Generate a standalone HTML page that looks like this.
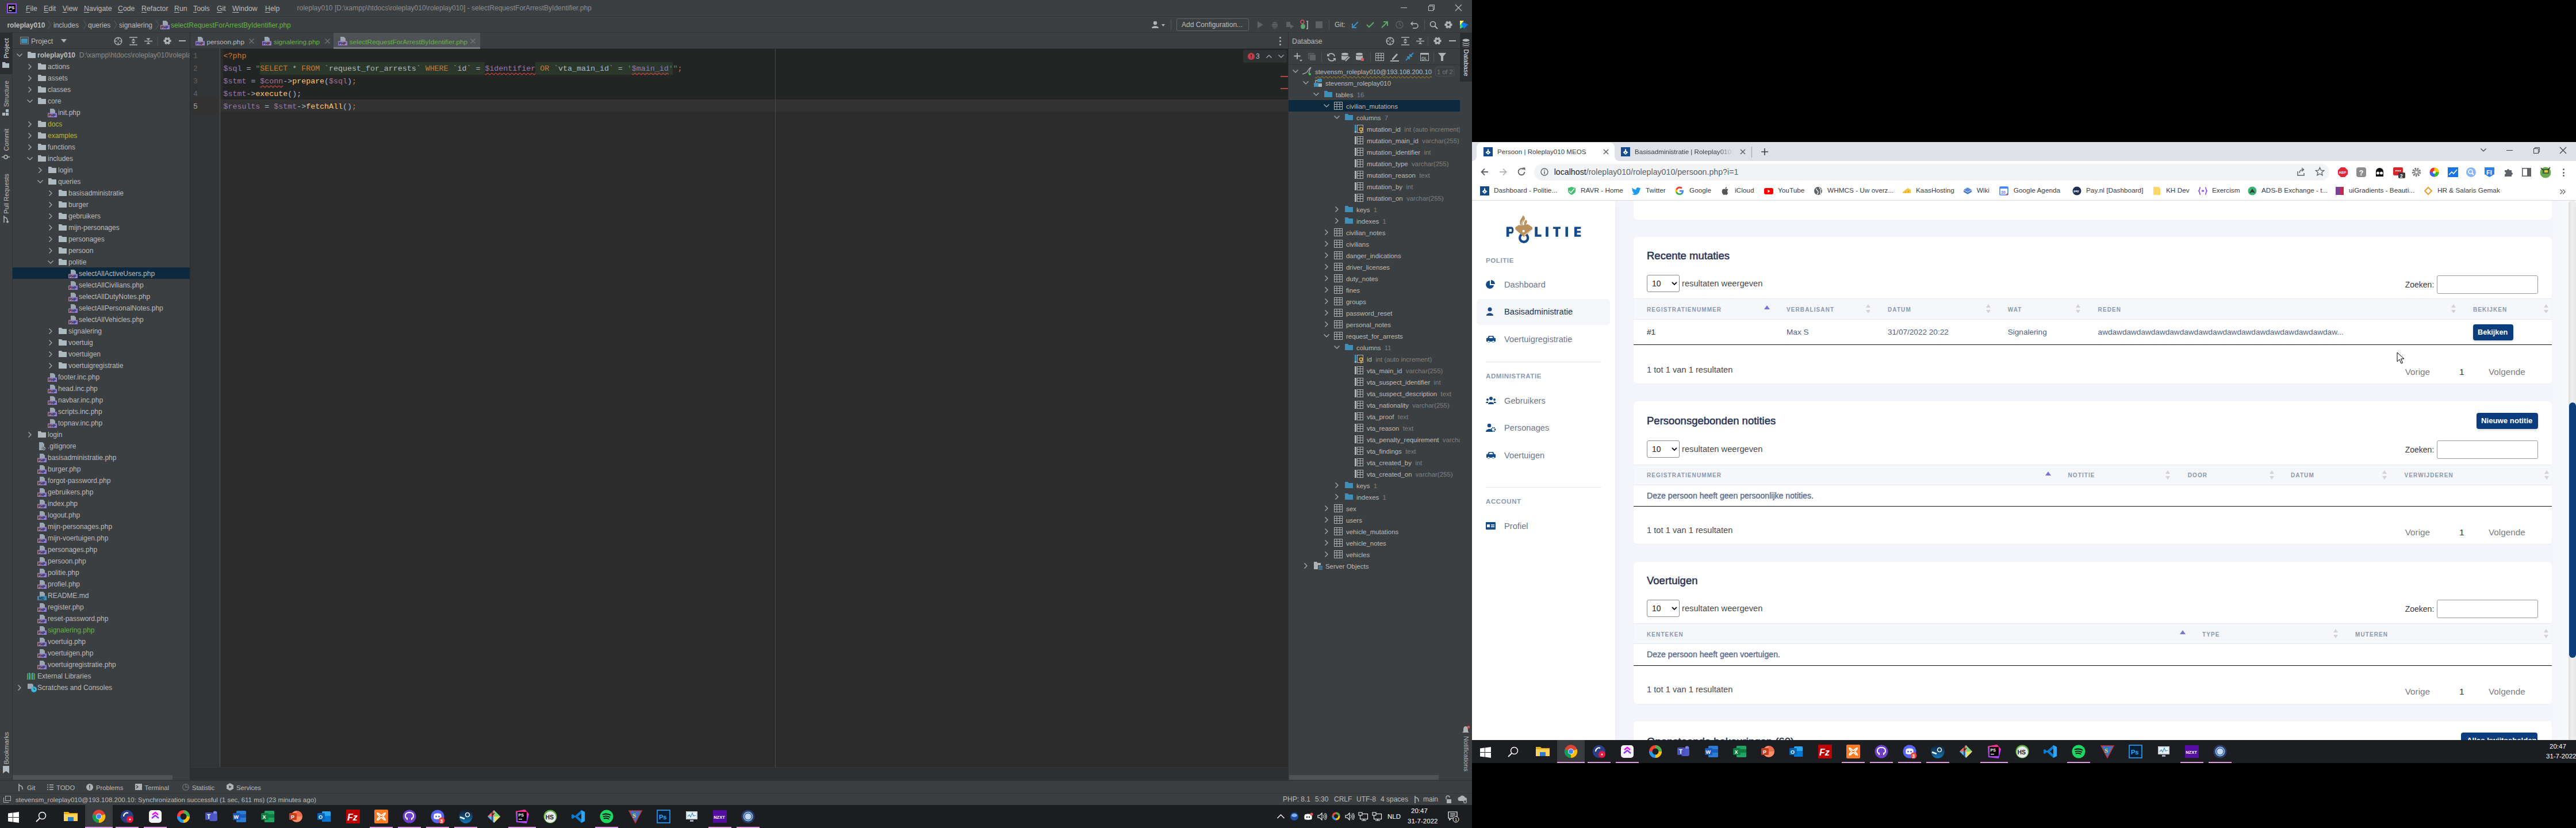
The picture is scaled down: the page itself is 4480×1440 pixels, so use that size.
<!DOCTYPE html><html><head><meta charset="utf-8"><style>
*{margin:0;padding:0;box-sizing:border-box}
html,body{width:4480px;height:1440px;overflow:hidden;background:#000}
body{position:relative;font-family:"Liberation Sans",sans-serif}
.t{position:absolute;white-space:nowrap;line-height:20px;height:20px}
.ide{font-size:12px;color:#bbbbbb}
.mono{font-family:"Liberation Mono",monospace}
svg{position:absolute;overflow:visible}
</style></head><body>
<div class="ide" style="position:absolute;left:0;top:0;width:2560px;height:1440px;background:#3c3f41;overflow:hidden">
<div style="position:absolute;left:0px;top:0px;width:2560px;height:28px;background:#3c3f41"></div>
<div style="position:absolute;left:0px;top:28px;width:2560px;height:1px;background:#333537"></div>
<svg style="left:12px;top:6px" width="17" height="17"><defs><linearGradient id="psg" x1="0" y1="0" x2="1" y2="1"><stop offset="0" stop-color="#b345f1"/><stop offset="1" stop-color="#765af8"/></linearGradient></defs><rect width="17" height="17" fill="url(#psg)"/><rect x="2" y="2" width="13" height="13" fill="#000"/><text x="3.2" y="9.5" font-size="7.5" font-weight="bold" fill="#fff" font-family="Liberation Sans">PS</text><rect x="3.5" y="12" width="5" height="1.2" fill="#fff"/></svg>
<div class="t" style="left:45px;top:5px;font-size:12.3px;color:#bbbbbb"><u style="text-decoration-thickness:1px;text-underline-offset:2px">F</u>ile</div>
<div class="t" style="left:76px;top:5px;font-size:12.3px;color:#bbbbbb"><u style="text-decoration-thickness:1px;text-underline-offset:2px">E</u>dit</div>
<div class="t" style="left:108.7px;top:5px;font-size:12.3px;color:#bbbbbb"><u style="text-decoration-thickness:1px;text-underline-offset:2px">V</u>iew</div>
<div class="t" style="left:146px;top:5px;font-size:12.3px;color:#bbbbbb"><u style="text-decoration-thickness:1px;text-underline-offset:2px">N</u>avigate</div>
<div class="t" style="left:205px;top:5px;font-size:12.3px;color:#bbbbbb"><u style="text-decoration-thickness:1px;text-underline-offset:2px">C</u>ode</div>
<div class="t" style="left:246px;top:5px;font-size:12.3px;color:#bbbbbb"><u style="text-decoration-thickness:1px;text-underline-offset:2px">R</u>efactor</div>
<div class="t" style="left:303px;top:5px;font-size:12.3px;color:#bbbbbb"><u style="text-decoration-thickness:1px;text-underline-offset:2px">R</u>un</div>
<div class="t" style="left:336px;top:5px;font-size:12.3px;color:#bbbbbb"><u style="text-decoration-thickness:1px;text-underline-offset:2px">T</u>ools</div>
<div class="t" style="left:377px;top:5px;font-size:12.3px;color:#bbbbbb"><u style="text-decoration-thickness:1px;text-underline-offset:2px">G</u>it</div>
<div class="t" style="left:404px;top:5px;font-size:12.3px;color:#bbbbbb"><u style="text-decoration-thickness:1px;text-underline-offset:2px">W</u>indow</div>
<div class="t" style="left:461px;top:5px;font-size:12.3px;color:#bbbbbb"><u style="text-decoration-thickness:1px;text-underline-offset:2px">H</u>elp</div>
<div class="t" style="left:516.5px;top:4px;font-size:12px;color:#8b8d8f">roleplay010 [D:\xampp\htdocs\roleplay010\roleplay010] - selectRequestForArrestByIdentifier.php</div>
<div style="position:absolute;left:2436px;top:13px;width:11px;height:1px;background:#bbb"></div>
<svg style="left:2484px;top:8px" width="12" height="12"><rect x="0.5" y="2.5" width="8" height="8" fill="none" stroke="#bbb"/><path d="M2.5 2.5V0.5H10.5V8.5H8.5" fill="none" stroke="#bbb"/></svg>
<svg style="left:2531px;top:8px" width="12" height="12"><path d="M0 0L11 11M11 0L0 11" stroke="#bbb" stroke-width="1.2"/></svg>
<div style="position:absolute;left:0px;top:29px;width:2560px;height:28px;background:#3c3f41"></div>
<div style="position:absolute;left:0px;top:56px;width:2560px;height:1px;background:#333537"></div>
<div class="t" style="left:12.4px;top:34px;font-size:12px;color:#bbbbbb;font-weight:bold">roleplay010</div>
<div class="t" style="left:93px;top:34px;font-size:12px;color:#bbbbbb;">includes</div>
<div class="t" style="left:153px;top:34px;font-size:12px;color:#bbbbbb;">queries</div>
<div class="t" style="left:207px;top:34px;font-size:12px;color:#bbbbbb;">signalering</div>
<svg style="left:83px;top:35px" width="6" height="16"><path d="M0.5 0.5L5 8L0.5 15.5" fill="none" stroke="#5e6163" stroke-width="1"/></svg>
<svg style="left:145px;top:35px" width="6" height="16"><path d="M0.5 0.5L5 8L0.5 15.5" fill="none" stroke="#5e6163" stroke-width="1"/></svg>
<svg style="left:198px;top:35px" width="6" height="16"><path d="M0.5 0.5L5 8L0.5 15.5" fill="none" stroke="#5e6163" stroke-width="1"/></svg>
<svg style="left:271px;top:35px" width="6" height="16"><path d="M0.5 0.5L5 8L0.5 15.5" fill="none" stroke="#5e6163" stroke-width="1"/></svg>
<svg style="left:279px;top:35px" width="16" height="16"><path d="M4 1H10L13 4V9H4Z" fill="#9aa7b0"/><path d="M4 1V6H7V1" fill="#9aa7b0"/><rect x="0" y="8.5" width="16" height="7.5" fill="#9c7fcb"/><text x="1" y="15" font-size="6.3" font-weight="bold" fill="#2b2b2b" font-family="Liberation Sans">PHP</text></svg>
<div class="t" style="left:297px;top:34px;font-size:12px;color:#62b543">selectRequestForArrestByIdentifier.php</div>
<svg style="left:2002px;top:35px" width="28" height="16"><circle cx="7" cy="5" r="3.2" fill="#aeb3b8"/><path d="M1 14C1 9 13 9 13 14Z" fill="#aeb3b8"/><path d="M18 7L24 7L21 11Z" fill="#aeb3b8"/></svg>
<div style="position:absolute;left:2036px;top:34px;width:1px;height:18px;background:#555"></div>
<div style="position:absolute;left:2046px;top:32px;width:126px;height:22px;border:1px solid #646464;border-radius:3px"></div>
<div class="t" style="left:2055px;top:33px;font-size:12px;color:#bbbbbb">Add Configuration...</div>
<svg style="left:2185px;top:36px" width="14" height="14"><path d="M2 1L12 7L2 13Z" fill="#5f6163"/></svg>
<svg style="left:2209px;top:35px" width="16" height="16"><ellipse cx="8" cy="9" rx="5" ry="6" fill="#5f6163"/><path d="M1 6H15M1 10H15M1 13H15" stroke="#3c3f41"/></svg>
<svg style="left:2235px;top:35px" width="16" height="16"><path d="M2 3H9V12H2Z" fill="#5f6163"/><path d="M9 7L15 11L9 15Z" fill="#5f6163"/></svg>
<svg style="left:2260px;top:34px" width="16" height="18"><circle cx="5" cy="4" r="3" fill="none" stroke="#e05555" stroke-width="1.3"/><ellipse cx="6" cy="12" rx="4" ry="4.5" fill="#59a869"/><path d="M12 3H14V16H12" fill="none" stroke="#bbb" stroke-width="1.5"/></svg>
<div style="position:absolute;left:2288px;top:37px;width:12px;height:12px;background:#5f6163"></div>
<div style="position:absolute;left:2311px;top:34px;width:1px;height:18px;background:#555"></div>
<div class="t" style="left:2321px;top:33px;font-size:12px;color:#bbbbbb">Git:</div>
<svg style="left:2350px;top:36px" width="14" height="14"><path d="M12 2L2 12M2 5V12H9" fill="none" stroke="#3592c4" stroke-width="2"/></svg>
<svg style="left:2376px;top:36px" width="14" height="14"><path d="M1 7L5 11L13 3" fill="none" stroke="#59a869" stroke-width="2"/></svg>
<svg style="left:2401px;top:36px" width="14" height="14"><path d="M2 12L12 2M5 2H12V9" fill="none" stroke="#59a869" stroke-width="2"/></svg>
<svg style="left:2427px;top:36px" width="14" height="14"><circle cx="7" cy="7" r="6" fill="none" stroke="#5f6163" stroke-width="1.3"/><path d="M7 3V7L10 9" fill="none" stroke="#5f6163" stroke-width="1.2"/></svg>
<svg style="left:2453px;top:36px" width="14" height="14"><path d="M4 2L1 5L4 8M1 5H9A4 4 0 0 1 9 13H4" fill="none" stroke="#bbb" stroke-width="1.4"/></svg>
<div style="position:absolute;left:2477px;top:34px;width:1px;height:18px;background:#555"></div>
<svg style="left:2486px;top:36px" width="15" height="15"><circle cx="6" cy="6" r="4.5" fill="none" stroke="#bbb" stroke-width="1.6"/><path d="M9.5 9.5L14 14" stroke="#bbb" stroke-width="1.8"/></svg>
<svg style="left:2512px;top:36px" width="14" height="14" viewBox="0 0 14 14"><path fill-rule="evenodd" d="M13.57 5.25 L13.57 8.75 L11.04 9.21 L10.93 9.39 L11.80 11.82 L8.77 13.57 L7.11 11.60 L6.89 11.60 L5.23 13.57 L2.20 11.82 L3.07 9.39 L2.96 9.21 L0.43 8.75 L0.43 5.25 L2.96 4.79 L3.07 4.61 L2.20 2.18 L5.23 0.43 L6.89 2.40 L7.11 2.40 L8.77 0.43 L11.80 2.18 L10.93 4.61 L11.04 4.79Z M7 4.9A2.1 2.1 0 1 0 7 9.1A2.1 2.1 0 1 0 7 4.9Z" fill="#afb1b3"/></svg>
<svg style="left:2538px;top:35px" width="16" height="16"><path d="M1 1L15 8L1 15Z" fill="#21d789"/><path d="M1 1L15 8L8 15Z" fill="#087cfa"/><path d="M1 1L8 1L1 9Z" fill="#fcf84a"/></svg>
<div style="position:absolute;left:0px;top:57px;width:21px;height:1300px;background:#3c3f41"></div>
<div style="position:absolute;left:21px;top:57px;width:1px;height:1300px;background:#323232"></div>
<div style="position:absolute;left:0px;top:57px;width:21px;height:72px;background:#2b2d30"></div>
<div style="position:absolute;left:10.5px;top:84px;width:0;height:0"><div style="position:absolute;left:0;top:0;transform:translate(-50%,-50%) rotate(-90deg);white-space:nowrap;font-size:11.3px;line-height:14px;color:#dfe1e5">Project</div></div>
<svg style="left:4px;top:107px" width="13" height="12"><path d="M0 1H5L6 3H12V11H0Z" fill="#aeb9c0"/></svg>
<div style="position:absolute;left:10.5px;top:163px;width:0;height:0"><div style="position:absolute;left:0;top:0;transform:translate(-50%,-50%) rotate(-90deg);white-space:nowrap;font-size:11.3px;line-height:14px;color:#bbbbbb">Structure</div></div>
<svg style="left:4px;top:190px" width="12" height="12"><rect x="0" y="6" width="5" height="5" fill="#aeb9c0"/><rect x="6" y="6" width="5" height="5" fill="#aeb9c0"/><rect x="6" y="0" width="5" height="5" fill="#aeb9c0"/></svg>
<div style="position:absolute;left:10.5px;top:242.5px;width:0;height:0"><div style="position:absolute;left:0;top:0;transform:translate(-50%,-50%) rotate(-90deg);white-space:nowrap;font-size:11.3px;line-height:14px;color:#bbbbbb">Commit</div></div>
<svg style="left:3px;top:267px" width="14" height="12"><circle cx="7" cy="6" r="3" fill="none" stroke="#aeb9c0" stroke-width="1.5"/><path d="M0 6H4M10 6H14" stroke="#aeb9c0" stroke-width="1.5"/></svg>
<div style="position:absolute;left:10.5px;top:336.5px;width:0;height:0"><div style="position:absolute;left:0;top:0;transform:translate(-50%,-50%) rotate(-90deg);white-space:nowrap;font-size:11.3px;line-height:14px;color:#bbbbbb">Pull Requests</div></div>
<svg style="left:4px;top:374px" width="12" height="14"><path d="M3 1V13M3 4C9 4 9 8 9 13M7 11L9 13L11 11" fill="none" stroke="#aeb9c0" stroke-width="1.5"/></svg>
<div style="position:absolute;left:10.5px;top:1301px;width:0;height:0"><div style="position:absolute;left:0;top:0;transform:translate(-50%,-50%) rotate(-90deg);white-space:nowrap;font-size:11.3px;line-height:14px;color:#bbbbbb">Bookmarks</div></div>
<svg style="left:5px;top:1332px" width="11" height="13"><path d="M0 0H11V13L5.5 9L0 13Z" fill="#aeb9c0"/></svg>
<div style="position:absolute;left:2539px;top:57px;width:21px;height:1300px;background:#3c3f41"></div>
<div style="position:absolute;left:2538px;top:57px;width:1px;height:1300px;background:#323232"></div>
<div style="position:absolute;left:2539px;top:57px;width:21px;height:85px;background:#2b2d30"></div>
<svg style="left:2543px;top:67px" width="13" height="15"><ellipse cx="6.5" cy="3" rx="6" ry="2.5" fill="#afb1b3"/><path d="M0.5 5.5A6 2.5 0 0 0 12.5 5.5V7A6 2.5 0 0 1 0.5 7Z" fill="#afb1b3"/><path d="M0.5 9A6 2.5 0 0 0 12.5 9V10.5A6 2.5 0 0 1 0.5 10.5Z" fill="#afb1b3"/><path d="M0.5 12.5A6 2.5 0 0 0 12.5 12.5V13A6 2.5 0 0 1 0.5 13Z" fill="#afb1b3"/></svg>
<div style="position:absolute;left:2550px;top:109px;width:0;height:0"><div style="position:absolute;left:0;top:0;transform:translate(-50%,-50%) rotate(90deg);white-space:nowrap;font-size:11px;line-height:14px;color:#e6e6e6">Database</div></div>
<svg style="left:2542px;top:1262px" width="15" height="15"><path d="M7 1C4 1 3 4 3 7V10L1 12H13L11 10V7C11 4 10 1 7 1Z" fill="#afb1b3"/><circle cx="12" cy="2.5" r="2.3" fill="#e55353"/></svg>
<div style="position:absolute;left:2550px;top:1311px;width:0;height:0"><div style="position:absolute;left:0;top:0;transform:translate(-50%,-50%) rotate(90deg);white-space:nowrap;font-size:11.3px;line-height:14px;color:#afb1b3">Notifications</div></div>
<div style="position:absolute;left:22px;top:57px;width:308px;height:28px;background:#3c3f41"></div>
<div style="position:absolute;left:22px;top:84px;width:308px;height:1px;background:#323232"></div>
<svg style="left:35px;top:64px" width="15" height="13"><rect x="0.5" y="0.5" width="14" height="12" fill="none" stroke="#7f8b91"/><rect x="2" y="3" width="11" height="8" fill="#3d8fb8"/></svg>
<div class="t" style="left:54px;top:62px;font-size:12.3px;color:#bbbbbb">Project</div>
<svg style="left:106px;top:68px" width="10" height="6"><path d="M0 0H10L5 6Z" fill="#afb1b3"/></svg>
<svg style="left:198px;top:64px" width="15" height="15"><circle cx="7.5" cy="7.5" r="6.3" fill="none" stroke="#afb1b3" stroke-width="1.5"/><path d="M7.5 1.5V5.5M7.5 9.5V13.5M1.5 7.5H5.5M9.5 7.5H13.5" stroke="#afb1b3" stroke-width="1.5"/></svg>
<svg style="left:225px;top:64px" width="14" height="15"><path d="M0 1H14M0 14H14" stroke="#afb1b3" stroke-width="1.5"/><path d="M7 3L10.5 6.5H3.5ZM7 12L10.5 8.5H3.5Z" fill="#afb1b3"/></svg>
<svg style="left:251px;top:64px" width="14" height="15"><path d="M0 7.5H14" stroke="#afb1b3" stroke-width="1.5"/><path d="M7 6L10.5 2.5H3.5ZM7 9L10.5 12.5H3.5Z" fill="#afb1b3"/></svg>
<div style="position:absolute;left:274px;top:63px;width:1px;height:17px;background:#515151"></div>
<svg style="left:284px;top:64px" width="14" height="14" viewBox="0 0 14 14"><path fill-rule="evenodd" d="M13.57 5.25 L13.57 8.75 L11.04 9.21 L10.93 9.39 L11.80 11.82 L8.77 13.57 L7.11 11.60 L6.89 11.60 L5.23 13.57 L2.20 11.82 L3.07 9.39 L2.96 9.21 L0.43 8.75 L0.43 5.25 L2.96 4.79 L3.07 4.61 L2.20 2.18 L5.23 0.43 L6.89 2.40 L7.11 2.40 L8.77 0.43 L11.80 2.18 L10.93 4.61 L11.04 4.79Z M7 4.9A2.1 2.1 0 1 0 7 9.1A2.1 2.1 0 1 0 7 4.9Z" fill="#afb1b3"/></svg>
<div style="position:absolute;left:311px;top:70px;width:12px;height:2px;background:#afb1b3"></div>
<div style="position:absolute;left:22px;top:85px;width:308px;height:1272px;overflow:hidden">
<svg style="left:7px;top:8px" width="10" height="6"><path d="M0.5 0.5L5 5L9.5 0.5" fill="none" stroke="#afb1b3" stroke-width="1.2"/></svg>
<svg style="left:25px;top:4px" width="16" height="14"><path d="M1 1H6L7.5 3H15V12H1Z" fill="#aeb9c0"/></svg>
<div class="t" style="left:43px;top:1px;font-size:12px;color:#bbb"><b>roleplay010</b>&nbsp; <span style="color:#8c8c8c">D:\xampp\htdocs\roleplay010\roleplay010</span></div>
<svg style="left:27px;top:26px" width="6" height="10"><path d="M0.5 0.5L5 5L0.5 9.5" fill="none" stroke="#afb1b3" stroke-width="1.2"/></svg>
<svg style="left:43px;top:24px" width="16" height="14"><path d="M1 1H6L7.5 3H15V12H1Z" fill="#aeb9c0"/></svg>
<div class="t" style="left:61px;top:21px;font-size:12px;color:#bbbbbb">actions</div>
<svg style="left:27px;top:46px" width="6" height="10"><path d="M0.5 0.5L5 5L0.5 9.5" fill="none" stroke="#afb1b3" stroke-width="1.2"/></svg>
<svg style="left:43px;top:44px" width="16" height="14"><path d="M1 1H6L7.5 3H15V12H1Z" fill="#aeb9c0"/></svg>
<div class="t" style="left:61px;top:41px;font-size:12px;color:#bbbbbb">assets</div>
<svg style="left:27px;top:66px" width="6" height="10"><path d="M0.5 0.5L5 5L0.5 9.5" fill="none" stroke="#afb1b3" stroke-width="1.2"/></svg>
<svg style="left:43px;top:64px" width="16" height="14"><path d="M1 1H6L7.5 3H15V12H1Z" fill="#aeb9c0"/></svg>
<div class="t" style="left:61px;top:61px;font-size:12px;color:#bbbbbb">classes</div>
<svg style="left:25px;top:88px" width="10" height="6"><path d="M0.5 0.5L5 5L9.5 0.5" fill="none" stroke="#afb1b3" stroke-width="1.2"/></svg>
<svg style="left:43px;top:84px" width="16" height="14"><path d="M1 1H6L7.5 3H15V12H1Z" fill="#aeb9c0"/></svg>
<div class="t" style="left:61px;top:81px;font-size:12px;color:#bbbbbb">core</div>
<svg style="left:61px;top:103px" width="16" height="16"><path d="M4 1H10L13 4V9H4Z" fill="#9aa7b0"/><path d="M4 1V6H7V1" fill="#9aa7b0"/><rect x="0" y="8.5" width="16" height="7.5" fill="#9c7fcb"/><text x="1" y="15" font-size="6.3" font-weight="bold" fill="#2b2b2b" font-family="Liberation Sans">PHP</text></svg>
<div class="t" style="left:79px;top:101px;font-size:12px;color:#bbbbbb">init.php</div>
<svg style="left:27px;top:126px" width="6" height="10"><path d="M0.5 0.5L5 5L0.5 9.5" fill="none" stroke="#afb1b3" stroke-width="1.2"/></svg>
<svg style="left:43px;top:124px" width="16" height="14"><path d="M1 1H6L7.5 3H15V12H1Z" fill="#aeb9c0"/></svg>
<div class="t" style="left:61px;top:121px;font-size:12px;color:#bbb529">docs</div>
<svg style="left:27px;top:146px" width="6" height="10"><path d="M0.5 0.5L5 5L0.5 9.5" fill="none" stroke="#afb1b3" stroke-width="1.2"/></svg>
<svg style="left:43px;top:144px" width="16" height="14"><path d="M1 1H6L7.5 3H15V12H1Z" fill="#aeb9c0"/></svg>
<div class="t" style="left:61px;top:141px;font-size:12px;color:#bbb529">examples</div>
<svg style="left:27px;top:166px" width="6" height="10"><path d="M0.5 0.5L5 5L0.5 9.5" fill="none" stroke="#afb1b3" stroke-width="1.2"/></svg>
<svg style="left:43px;top:164px" width="16" height="14"><path d="M1 1H6L7.5 3H15V12H1Z" fill="#aeb9c0"/></svg>
<div class="t" style="left:61px;top:161px;font-size:12px;color:#bbbbbb">functions</div>
<svg style="left:25px;top:188px" width="10" height="6"><path d="M0.5 0.5L5 5L9.5 0.5" fill="none" stroke="#afb1b3" stroke-width="1.2"/></svg>
<svg style="left:43px;top:184px" width="16" height="14"><path d="M1 1H6L7.5 3H15V12H1Z" fill="#aeb9c0"/></svg>
<div class="t" style="left:61px;top:181px;font-size:12px;color:#bbbbbb">includes</div>
<svg style="left:45px;top:206px" width="6" height="10"><path d="M0.5 0.5L5 5L0.5 9.5" fill="none" stroke="#afb1b3" stroke-width="1.2"/></svg>
<svg style="left:61px;top:204px" width="16" height="14"><path d="M1 1H6L7.5 3H15V12H1Z" fill="#aeb9c0"/></svg>
<div class="t" style="left:79px;top:201px;font-size:12px;color:#bbbbbb">login</div>
<svg style="left:43px;top:228px" width="10" height="6"><path d="M0.5 0.5L5 5L9.5 0.5" fill="none" stroke="#afb1b3" stroke-width="1.2"/></svg>
<svg style="left:61px;top:224px" width="16" height="14"><path d="M1 1H6L7.5 3H15V12H1Z" fill="#aeb9c0"/></svg>
<div class="t" style="left:79px;top:221px;font-size:12px;color:#bbbbbb">queries</div>
<svg style="left:63px;top:246px" width="6" height="10"><path d="M0.5 0.5L5 5L0.5 9.5" fill="none" stroke="#afb1b3" stroke-width="1.2"/></svg>
<svg style="left:79px;top:244px" width="16" height="14"><path d="M1 1H6L7.5 3H15V12H1Z" fill="#aeb9c0"/></svg>
<div class="t" style="left:97px;top:241px;font-size:12px;color:#bbbbbb">basisadministratie</div>
<svg style="left:63px;top:266px" width="6" height="10"><path d="M0.5 0.5L5 5L0.5 9.5" fill="none" stroke="#afb1b3" stroke-width="1.2"/></svg>
<svg style="left:79px;top:264px" width="16" height="14"><path d="M1 1H6L7.5 3H15V12H1Z" fill="#aeb9c0"/></svg>
<div class="t" style="left:97px;top:261px;font-size:12px;color:#bbbbbb">burger</div>
<svg style="left:63px;top:286px" width="6" height="10"><path d="M0.5 0.5L5 5L0.5 9.5" fill="none" stroke="#afb1b3" stroke-width="1.2"/></svg>
<svg style="left:79px;top:284px" width="16" height="14"><path d="M1 1H6L7.5 3H15V12H1Z" fill="#aeb9c0"/></svg>
<div class="t" style="left:97px;top:281px;font-size:12px;color:#bbbbbb">gebruikers</div>
<svg style="left:63px;top:306px" width="6" height="10"><path d="M0.5 0.5L5 5L0.5 9.5" fill="none" stroke="#afb1b3" stroke-width="1.2"/></svg>
<svg style="left:79px;top:304px" width="16" height="14"><path d="M1 1H6L7.5 3H15V12H1Z" fill="#aeb9c0"/></svg>
<div class="t" style="left:97px;top:301px;font-size:12px;color:#bbbbbb">mijn-personages</div>
<svg style="left:63px;top:326px" width="6" height="10"><path d="M0.5 0.5L5 5L0.5 9.5" fill="none" stroke="#afb1b3" stroke-width="1.2"/></svg>
<svg style="left:79px;top:324px" width="16" height="14"><path d="M1 1H6L7.5 3H15V12H1Z" fill="#aeb9c0"/></svg>
<div class="t" style="left:97px;top:321px;font-size:12px;color:#bbbbbb">personages</div>
<svg style="left:63px;top:346px" width="6" height="10"><path d="M0.5 0.5L5 5L0.5 9.5" fill="none" stroke="#afb1b3" stroke-width="1.2"/></svg>
<svg style="left:79px;top:344px" width="16" height="14"><path d="M1 1H6L7.5 3H15V12H1Z" fill="#aeb9c0"/></svg>
<div class="t" style="left:97px;top:341px;font-size:12px;color:#bbbbbb">persoon</div>
<svg style="left:61px;top:368px" width="10" height="6"><path d="M0.5 0.5L5 5L9.5 0.5" fill="none" stroke="#afb1b3" stroke-width="1.2"/></svg>
<svg style="left:79px;top:364px" width="16" height="14"><path d="M1 1H6L7.5 3H15V12H1Z" fill="#aeb9c0"/></svg>
<div class="t" style="left:97px;top:361px;font-size:12px;color:#bbbbbb">politie</div>
<div style="position:absolute;left:0px;top:380px;width:308px;height:20px;background:#0d293e"></div>
<svg style="left:97px;top:383px" width="16" height="16"><path d="M4 1H10L13 4V9H4Z" fill="#9aa7b0"/><path d="M4 1V6H7V1" fill="#9aa7b0"/><rect x="0" y="8.5" width="16" height="7.5" fill="#9c7fcb"/><text x="1" y="15" font-size="6.3" font-weight="bold" fill="#2b2b2b" font-family="Liberation Sans">PHP</text></svg>
<div class="t" style="left:115px;top:381px;font-size:12px;color:#bbbbbb">selectAllActiveUsers.php</div>
<svg style="left:97px;top:403px" width="16" height="16"><path d="M4 1H10L13 4V9H4Z" fill="#9aa7b0"/><path d="M4 1V6H7V1" fill="#9aa7b0"/><rect x="0" y="8.5" width="16" height="7.5" fill="#9c7fcb"/><text x="1" y="15" font-size="6.3" font-weight="bold" fill="#2b2b2b" font-family="Liberation Sans">PHP</text></svg>
<div class="t" style="left:115px;top:401px;font-size:12px;color:#bbbbbb">selectAllCivilians.php</div>
<svg style="left:97px;top:423px" width="16" height="16"><path d="M4 1H10L13 4V9H4Z" fill="#9aa7b0"/><path d="M4 1V6H7V1" fill="#9aa7b0"/><rect x="0" y="8.5" width="16" height="7.5" fill="#9c7fcb"/><text x="1" y="15" font-size="6.3" font-weight="bold" fill="#2b2b2b" font-family="Liberation Sans">PHP</text></svg>
<div class="t" style="left:115px;top:421px;font-size:12px;color:#bbbbbb">selectAllDutyNotes.php</div>
<svg style="left:97px;top:443px" width="16" height="16"><path d="M4 1H10L13 4V9H4Z" fill="#9aa7b0"/><path d="M4 1V6H7V1" fill="#9aa7b0"/><rect x="0" y="8.5" width="16" height="7.5" fill="#9c7fcb"/><text x="1" y="15" font-size="6.3" font-weight="bold" fill="#2b2b2b" font-family="Liberation Sans">PHP</text></svg>
<div class="t" style="left:115px;top:441px;font-size:12px;color:#bbbbbb">selectAllPersonalNotes.php</div>
<svg style="left:97px;top:463px" width="16" height="16"><path d="M4 1H10L13 4V9H4Z" fill="#9aa7b0"/><path d="M4 1V6H7V1" fill="#9aa7b0"/><rect x="0" y="8.5" width="16" height="7.5" fill="#9c7fcb"/><text x="1" y="15" font-size="6.3" font-weight="bold" fill="#2b2b2b" font-family="Liberation Sans">PHP</text></svg>
<div class="t" style="left:115px;top:461px;font-size:12px;color:#bbbbbb">selectAllVehicles.php</div>
<svg style="left:63px;top:486px" width="6" height="10"><path d="M0.5 0.5L5 5L0.5 9.5" fill="none" stroke="#afb1b3" stroke-width="1.2"/></svg>
<svg style="left:79px;top:484px" width="16" height="14"><path d="M1 1H6L7.5 3H15V12H1Z" fill="#aeb9c0"/></svg>
<div class="t" style="left:97px;top:481px;font-size:12px;color:#bbbbbb">signalering</div>
<svg style="left:63px;top:506px" width="6" height="10"><path d="M0.5 0.5L5 5L0.5 9.5" fill="none" stroke="#afb1b3" stroke-width="1.2"/></svg>
<svg style="left:79px;top:504px" width="16" height="14"><path d="M1 1H6L7.5 3H15V12H1Z" fill="#aeb9c0"/></svg>
<div class="t" style="left:97px;top:501px;font-size:12px;color:#bbbbbb">voertuig</div>
<svg style="left:63px;top:526px" width="6" height="10"><path d="M0.5 0.5L5 5L0.5 9.5" fill="none" stroke="#afb1b3" stroke-width="1.2"/></svg>
<svg style="left:79px;top:524px" width="16" height="14"><path d="M1 1H6L7.5 3H15V12H1Z" fill="#aeb9c0"/></svg>
<div class="t" style="left:97px;top:521px;font-size:12px;color:#bbbbbb">voertuigen</div>
<svg style="left:63px;top:546px" width="6" height="10"><path d="M0.5 0.5L5 5L0.5 9.5" fill="none" stroke="#afb1b3" stroke-width="1.2"/></svg>
<svg style="left:79px;top:544px" width="16" height="14"><path d="M1 1H6L7.5 3H15V12H1Z" fill="#aeb9c0"/></svg>
<div class="t" style="left:97px;top:541px;font-size:12px;color:#bbbbbb">voertuigregistratie</div>
<svg style="left:61px;top:563px" width="16" height="16"><path d="M4 1H10L13 4V9H4Z" fill="#9aa7b0"/><path d="M4 1V6H7V1" fill="#9aa7b0"/><rect x="0" y="8.5" width="16" height="7.5" fill="#9c7fcb"/><text x="1" y="15" font-size="6.3" font-weight="bold" fill="#2b2b2b" font-family="Liberation Sans">PHP</text></svg>
<div class="t" style="left:79px;top:561px;font-size:12px;color:#bbbbbb">footer.inc.php</div>
<svg style="left:61px;top:583px" width="16" height="16"><path d="M4 1H10L13 4V9H4Z" fill="#9aa7b0"/><path d="M4 1V6H7V1" fill="#9aa7b0"/><rect x="0" y="8.5" width="16" height="7.5" fill="#9c7fcb"/><text x="1" y="15" font-size="6.3" font-weight="bold" fill="#2b2b2b" font-family="Liberation Sans">PHP</text></svg>
<div class="t" style="left:79px;top:581px;font-size:12px;color:#bbbbbb">head.inc.php</div>
<svg style="left:61px;top:603px" width="16" height="16"><path d="M4 1H10L13 4V9H4Z" fill="#9aa7b0"/><path d="M4 1V6H7V1" fill="#9aa7b0"/><rect x="0" y="8.5" width="16" height="7.5" fill="#9c7fcb"/><text x="1" y="15" font-size="6.3" font-weight="bold" fill="#2b2b2b" font-family="Liberation Sans">PHP</text></svg>
<div class="t" style="left:79px;top:601px;font-size:12px;color:#bbbbbb">navbar.inc.php</div>
<svg style="left:61px;top:623px" width="16" height="16"><path d="M4 1H10L13 4V9H4Z" fill="#9aa7b0"/><path d="M4 1V6H7V1" fill="#9aa7b0"/><rect x="0" y="8.5" width="16" height="7.5" fill="#9c7fcb"/><text x="1" y="15" font-size="6.3" font-weight="bold" fill="#2b2b2b" font-family="Liberation Sans">PHP</text></svg>
<div class="t" style="left:79px;top:621px;font-size:12px;color:#bbbbbb">scripts.inc.php</div>
<svg style="left:61px;top:643px" width="16" height="16"><path d="M4 1H10L13 4V9H4Z" fill="#9aa7b0"/><path d="M4 1V6H7V1" fill="#9aa7b0"/><rect x="0" y="8.5" width="16" height="7.5" fill="#9c7fcb"/><text x="1" y="15" font-size="6.3" font-weight="bold" fill="#2b2b2b" font-family="Liberation Sans">PHP</text></svg>
<div class="t" style="left:79px;top:641px;font-size:12px;color:#bbbbbb">topnav.inc.php</div>
<svg style="left:27px;top:666px" width="6" height="10"><path d="M0.5 0.5L5 5L0.5 9.5" fill="none" stroke="#afb1b3" stroke-width="1.2"/></svg>
<svg style="left:43px;top:664px" width="16" height="14"><path d="M1 1H6L7.5 3H15V12H1Z" fill="#aeb9c0"/></svg>
<div class="t" style="left:61px;top:661px;font-size:12px;color:#bbbbbb">login</div>
<svg style="left:43px;top:683px" width="16" height="16"><path d="M3 1H9L12 4V15H3Z" fill="#9aa7b0"/><circle cx="11" cy="12" r="3.5" fill="#3c3f41"/><circle cx="11" cy="12" r="2.6" fill="none" stroke="#9aa7b0" stroke-width="1.1"/><path d="M9 14L13 10" stroke="#9aa7b0" stroke-width="1.1"/></svg>
<div class="t" style="left:61px;top:681px;font-size:12px;color:#bbbbbb">.gitignore</div>
<svg style="left:43px;top:703px" width="16" height="16"><path d="M4 1H10L13 4V9H4Z" fill="#9aa7b0"/><path d="M4 1V6H7V1" fill="#9aa7b0"/><rect x="0" y="8.5" width="16" height="7.5" fill="#9c7fcb"/><text x="1" y="15" font-size="6.3" font-weight="bold" fill="#2b2b2b" font-family="Liberation Sans">PHP</text></svg>
<div class="t" style="left:61px;top:701px;font-size:12px;color:#bbbbbb">basisadministratie.php</div>
<svg style="left:43px;top:723px" width="16" height="16"><path d="M4 1H10L13 4V9H4Z" fill="#9aa7b0"/><path d="M4 1V6H7V1" fill="#9aa7b0"/><rect x="0" y="8.5" width="16" height="7.5" fill="#9c7fcb"/><text x="1" y="15" font-size="6.3" font-weight="bold" fill="#2b2b2b" font-family="Liberation Sans">PHP</text></svg>
<div class="t" style="left:61px;top:721px;font-size:12px;color:#bbbbbb">burger.php</div>
<svg style="left:43px;top:743px" width="16" height="16"><path d="M4 1H10L13 4V9H4Z" fill="#9aa7b0"/><path d="M4 1V6H7V1" fill="#9aa7b0"/><rect x="0" y="8.5" width="16" height="7.5" fill="#9c7fcb"/><text x="1" y="15" font-size="6.3" font-weight="bold" fill="#2b2b2b" font-family="Liberation Sans">PHP</text></svg>
<div class="t" style="left:61px;top:741px;font-size:12px;color:#bbbbbb">forgot-password.php</div>
<svg style="left:43px;top:763px" width="16" height="16"><path d="M4 1H10L13 4V9H4Z" fill="#9aa7b0"/><path d="M4 1V6H7V1" fill="#9aa7b0"/><rect x="0" y="8.5" width="16" height="7.5" fill="#9c7fcb"/><text x="1" y="15" font-size="6.3" font-weight="bold" fill="#2b2b2b" font-family="Liberation Sans">PHP</text></svg>
<div class="t" style="left:61px;top:761px;font-size:12px;color:#bbbbbb">gebruikers.php</div>
<svg style="left:43px;top:783px" width="16" height="16"><path d="M4 1H10L13 4V9H4Z" fill="#9aa7b0"/><path d="M4 1V6H7V1" fill="#9aa7b0"/><rect x="0" y="8.5" width="16" height="7.5" fill="#9c7fcb"/><text x="1" y="15" font-size="6.3" font-weight="bold" fill="#2b2b2b" font-family="Liberation Sans">PHP</text></svg>
<div class="t" style="left:61px;top:781px;font-size:12px;color:#bbbbbb">index.php</div>
<svg style="left:43px;top:803px" width="16" height="16"><path d="M4 1H10L13 4V9H4Z" fill="#9aa7b0"/><path d="M4 1V6H7V1" fill="#9aa7b0"/><rect x="0" y="8.5" width="16" height="7.5" fill="#9c7fcb"/><text x="1" y="15" font-size="6.3" font-weight="bold" fill="#2b2b2b" font-family="Liberation Sans">PHP</text></svg>
<div class="t" style="left:61px;top:801px;font-size:12px;color:#bbbbbb">logout.php</div>
<svg style="left:43px;top:823px" width="16" height="16"><path d="M4 1H10L13 4V9H4Z" fill="#9aa7b0"/><path d="M4 1V6H7V1" fill="#9aa7b0"/><rect x="0" y="8.5" width="16" height="7.5" fill="#9c7fcb"/><text x="1" y="15" font-size="6.3" font-weight="bold" fill="#2b2b2b" font-family="Liberation Sans">PHP</text></svg>
<div class="t" style="left:61px;top:821px;font-size:12px;color:#bbbbbb">mijn-personages.php</div>
<svg style="left:43px;top:843px" width="16" height="16"><path d="M4 1H10L13 4V9H4Z" fill="#9aa7b0"/><path d="M4 1V6H7V1" fill="#9aa7b0"/><rect x="0" y="8.5" width="16" height="7.5" fill="#9c7fcb"/><text x="1" y="15" font-size="6.3" font-weight="bold" fill="#2b2b2b" font-family="Liberation Sans">PHP</text></svg>
<div class="t" style="left:61px;top:841px;font-size:12px;color:#bbbbbb">mijn-voertuigen.php</div>
<svg style="left:43px;top:863px" width="16" height="16"><path d="M4 1H10L13 4V9H4Z" fill="#9aa7b0"/><path d="M4 1V6H7V1" fill="#9aa7b0"/><rect x="0" y="8.5" width="16" height="7.5" fill="#9c7fcb"/><text x="1" y="15" font-size="6.3" font-weight="bold" fill="#2b2b2b" font-family="Liberation Sans">PHP</text></svg>
<div class="t" style="left:61px;top:861px;font-size:12px;color:#bbbbbb">personages.php</div>
<svg style="left:43px;top:883px" width="16" height="16"><path d="M4 1H10L13 4V9H4Z" fill="#9aa7b0"/><path d="M4 1V6H7V1" fill="#9aa7b0"/><rect x="0" y="8.5" width="16" height="7.5" fill="#9c7fcb"/><text x="1" y="15" font-size="6.3" font-weight="bold" fill="#2b2b2b" font-family="Liberation Sans">PHP</text></svg>
<div class="t" style="left:61px;top:881px;font-size:12px;color:#bbbbbb">persoon.php</div>
<svg style="left:43px;top:903px" width="16" height="16"><path d="M4 1H10L13 4V9H4Z" fill="#9aa7b0"/><path d="M4 1V6H7V1" fill="#9aa7b0"/><rect x="0" y="8.5" width="16" height="7.5" fill="#9c7fcb"/><text x="1" y="15" font-size="6.3" font-weight="bold" fill="#2b2b2b" font-family="Liberation Sans">PHP</text></svg>
<div class="t" style="left:61px;top:901px;font-size:12px;color:#bbbbbb">politie.php</div>
<svg style="left:43px;top:923px" width="16" height="16"><path d="M4 1H10L13 4V9H4Z" fill="#9aa7b0"/><path d="M4 1V6H7V1" fill="#9aa7b0"/><rect x="0" y="8.5" width="16" height="7.5" fill="#9c7fcb"/><text x="1" y="15" font-size="6.3" font-weight="bold" fill="#2b2b2b" font-family="Liberation Sans">PHP</text></svg>
<div class="t" style="left:61px;top:921px;font-size:12px;color:#bbbbbb">profiel.php</div>
<svg style="left:43px;top:943px" width="16" height="16"><path d="M4 1H10L13 4V9H4Z" fill="#9aa7b0"/><rect x="0" y="8.5" width="16" height="7.5" fill="#3d8fb8"/><text x="2.5" y="15" font-size="6.3" font-weight="bold" fill="#2b2b2b" font-family="Liberation Sans">MD</text></svg>
<div class="t" style="left:61px;top:941px;font-size:12px;color:#bbbbbb">README.md</div>
<svg style="left:43px;top:963px" width="16" height="16"><path d="M4 1H10L13 4V9H4Z" fill="#9aa7b0"/><path d="M4 1V6H7V1" fill="#9aa7b0"/><rect x="0" y="8.5" width="16" height="7.5" fill="#9c7fcb"/><text x="1" y="15" font-size="6.3" font-weight="bold" fill="#2b2b2b" font-family="Liberation Sans">PHP</text></svg>
<div class="t" style="left:61px;top:961px;font-size:12px;color:#bbbbbb">register.php</div>
<svg style="left:43px;top:983px" width="16" height="16"><path d="M4 1H10L13 4V9H4Z" fill="#9aa7b0"/><path d="M4 1V6H7V1" fill="#9aa7b0"/><rect x="0" y="8.5" width="16" height="7.5" fill="#9c7fcb"/><text x="1" y="15" font-size="6.3" font-weight="bold" fill="#2b2b2b" font-family="Liberation Sans">PHP</text></svg>
<div class="t" style="left:61px;top:981px;font-size:12px;color:#bbbbbb">reset-password.php</div>
<svg style="left:43px;top:1003px" width="16" height="16"><path d="M4 1H10L13 4V9H4Z" fill="#9aa7b0"/><path d="M4 1V6H7V1" fill="#9aa7b0"/><rect x="0" y="8.5" width="16" height="7.5" fill="#9c7fcb"/><text x="1" y="15" font-size="6.3" font-weight="bold" fill="#2b2b2b" font-family="Liberation Sans">PHP</text></svg>
<div class="t" style="left:61px;top:1001px;font-size:12px;color:#62b543">signalering.php</div>
<svg style="left:43px;top:1023px" width="16" height="16"><path d="M4 1H10L13 4V9H4Z" fill="#9aa7b0"/><path d="M4 1V6H7V1" fill="#9aa7b0"/><rect x="0" y="8.5" width="16" height="7.5" fill="#9c7fcb"/><text x="1" y="15" font-size="6.3" font-weight="bold" fill="#2b2b2b" font-family="Liberation Sans">PHP</text></svg>
<div class="t" style="left:61px;top:1021px;font-size:12px;color:#bbbbbb">voertuig.php</div>
<svg style="left:43px;top:1043px" width="16" height="16"><path d="M4 1H10L13 4V9H4Z" fill="#9aa7b0"/><path d="M4 1V6H7V1" fill="#9aa7b0"/><rect x="0" y="8.5" width="16" height="7.5" fill="#9c7fcb"/><text x="1" y="15" font-size="6.3" font-weight="bold" fill="#2b2b2b" font-family="Liberation Sans">PHP</text></svg>
<div class="t" style="left:61px;top:1041px;font-size:12px;color:#bbbbbb">voertuigen.php</div>
<svg style="left:43px;top:1063px" width="16" height="16"><path d="M4 1H10L13 4V9H4Z" fill="#9aa7b0"/><path d="M4 1V6H7V1" fill="#9aa7b0"/><rect x="0" y="8.5" width="16" height="7.5" fill="#9c7fcb"/><text x="1" y="15" font-size="6.3" font-weight="bold" fill="#2b2b2b" font-family="Liberation Sans">PHP</text></svg>
<div class="t" style="left:61px;top:1061px;font-size:12px;color:#bbbbbb">voertuigregistratie.php</div>
<svg style="left:25px;top:1083px" width="16" height="16"><path d="M1 3V14M4 2V14M7 3V14M10 2V14M13 3V14" stroke="#62b543" stroke-width="1.6"/><path d="M4 2V14M10 2V14" stroke="#40b6e0" stroke-width="1.6"/></svg>
<div class="t" style="left:43px;top:1081px;font-size:12px;color:#bbbbbb">External Libraries</div>
<svg style="left:9px;top:1106px" width="6" height="10"><path d="M0.5 0.5L5 5L0.5 9.5" fill="none" stroke="#afb1b3" stroke-width="1.2"/></svg>
<svg style="left:25px;top:1103px" width="18" height="16"><path d="M1 1H9L11 3V10H1Z" fill="#9aa7b0"/><circle cx="12" cy="11" r="5" fill="#40b6e0"/><path d="M12 8V11H14" fill="none" stroke="#2b2b2b" stroke-width="1"/></svg>
<div class="t" style="left:43px;top:1101px;font-size:12px;color:#bbbbbb">Scratches and Consoles</div>
</div>
<div style="position:absolute;left:22px;top:1348px;width:278px;height:8px;background:#505354;border-radius:1px"></div>
<div style="position:absolute;left:330px;top:57px;width:1px;height:1300px;background:#2b2b2b"></div>
<div style="position:absolute;left:331px;top:57px;width:1909px;height:28px;background:#3c3f41"></div>
<div style="position:absolute;left:331px;top:84px;width:1909px;height:1px;background:#323232"></div>
<div style="position:absolute;left:580px;top:57px;width:255px;height:28px;background:#4e5254"></div>
<div style="position:absolute;left:580px;top:82px;width:255px;height:3px;background:#747a80"></div>
<svg style="left:340px;top:63px" width="16" height="16"><path d="M4 1H10L13 4V9H4Z" fill="#9aa7b0"/><path d="M4 1V6H7V1" fill="#9aa7b0"/><rect x="0" y="8.5" width="16" height="7.5" fill="#9c7fcb"/><text x="1" y="15" font-size="6.3" font-weight="bold" fill="#2b2b2b" font-family="Liberation Sans">PHP</text></svg>
<div class="t" style="left:359.4px;top:62.5px;font-size:11.8px;color:#bbbbbb">persoon.php</div>
<svg style="left:433px;top:67px" width="9" height="9"><path d="M0.5 0.5L8.5 8.5M8.5 0.5L0.5 8.5" stroke="#75787a" stroke-width="1.1"/></svg>
<svg style="left:456px;top:63px" width="16" height="16"><path d="M4 1H10L13 4V9H4Z" fill="#9aa7b0"/><path d="M4 1V6H7V1" fill="#9aa7b0"/><rect x="0" y="8.5" width="16" height="7.5" fill="#9c7fcb"/><text x="1" y="15" font-size="6.3" font-weight="bold" fill="#2b2b2b" font-family="Liberation Sans">PHP</text></svg>
<div class="t" style="left:476px;top:62.5px;font-size:11.8px;color:#62b543">signalering.php</div>
<svg style="left:565px;top:67px" width="9" height="9"><path d="M0.5 0.5L8.5 8.5M8.5 0.5L0.5 8.5" stroke="#75787a" stroke-width="1.1"/></svg>
<svg style="left:588px;top:63px" width="16" height="16"><path d="M4 1H10L13 4V9H4Z" fill="#9aa7b0"/><path d="M4 1V6H7V1" fill="#9aa7b0"/><rect x="0" y="8.5" width="16" height="7.5" fill="#9c7fcb"/><text x="1" y="15" font-size="6.3" font-weight="bold" fill="#2b2b2b" font-family="Liberation Sans">PHP</text></svg>
<div class="t" style="left:607.8px;top:62.5px;font-size:11.8px;color:#62b543">selectRequestForArrestByIdentifier.php</div>
<svg style="left:818px;top:67px" width="9" height="9"><path d="M0.5 0.5L8.5 8.5M8.5 0.5L0.5 8.5" stroke="#75787a" stroke-width="1.1"/></svg>
<div style="position:absolute;left:2225px;top:64px;width:3px;height:3px;background:#afb1b3;border-radius:2px"></div>
<div style="position:absolute;left:2225px;top:70px;width:3px;height:3px;background:#afb1b3;border-radius:2px"></div>
<div style="position:absolute;left:2225px;top:76px;width:3px;height:3px;background:#afb1b3;border-radius:2px"></div>
<div style="position:absolute;left:331px;top:85px;width:1909px;height:1249px;background:#2b2b2b"></div>
<div style="position:absolute;left:331px;top:85px;width:51px;height:1249px;background:#313335"></div>
<div style="position:absolute;left:388px;top:85px;width:1852px;height:88px;background:#232525"></div>
<div style="position:absolute;left:331px;top:173px;width:1909px;height:22px;background:#323232"></div>
<div style="position:absolute;left:382px;top:85px;width:1px;height:1249px;background:#555555"></div>
<div style="position:absolute;left:1348px;top:85px;width:1px;height:1249px;background:#4a4a4a"></div>
<div class="t mono" style="left:336px;top:87.5px;font-size:13px;color:#606366">1</div>
<div class="t mono" style="left:336px;top:109.5px;font-size:13px;color:#606366">2</div>
<div class="t mono" style="left:336px;top:131.5px;font-size:13px;color:#606366">3</div>
<div class="t mono" style="left:336px;top:153.5px;font-size:13px;color:#606366">4</div>
<div class="t mono" style="left:336px;top:175.5px;font-size:13px;color:#a4a3a3">5</div>
<div style="position:absolute;left:452.3px;top:108px;width:391px;height:22px;background:#2c372b"></div>
<div style="position:absolute;left:931.1px;top:108px;width:239.4px;height:22px;background:#2c372b"></div>
<div style="position:absolute;left:1176px;top:108px;width:0px;height:22px;"></div>
<div class="t mono" style="left:388.5px;top:88px;font-size:13.3px;line-height:20px"><span style="color:#cc7832;">&lt;?php</span></div>
<div class="t mono" style="left:388.5px;top:110px;font-size:13.3px;line-height:20px"><span style="color:#9876aa;">$sql</span><span style="color:#a9b7c6;"> = </span><span style="color:#6a8759;">&quot;</span><span style="color:#cc7832;">SELECT</span><span style="color:#a9b7c6;"> * </span><span style="color:#cc7832;">FROM</span><span style="color:#a9b7c6;"> `request_for_arrests` </span><span style="color:#cc7832;">WHERE</span><span style="color:#a9b7c6;"> `id` = </span><span style="color:#9876aa;text-decoration:underline wavy #bc3f3c;text-underline-offset:3px">$identifier</span><span style="color:#cc7832;"> OR</span><span style="color:#a9b7c6;"> `vta_main_id` = </span><span style="color:#6a8759;">&#x27;</span><span style="color:#9876aa;text-decoration:underline wavy #bc3f3c;text-underline-offset:3px">$main_id</span><span style="color:#6a8759;">&#x27;</span><span style="color:#6a8759;">&quot;</span><span style="color:#cc7832;">;</span></div>
<div class="t mono" style="left:388.5px;top:132px;font-size:13.3px;line-height:20px"><span style="color:#9876aa;">$stmt</span><span style="color:#a9b7c6;"> = </span><span style="color:#9876aa;text-decoration:underline wavy #bc3f3c;text-underline-offset:3px">$conn</span><span style="color:#a9b7c6;">-&gt;</span><span style="color:#ffc66d;">prepare</span><span style="color:#a9b7c6;">(</span><span style="color:#9876aa;">$sql</span><span style="color:#a9b7c6;">)</span><span style="color:#cc7832;">;</span></div>
<div class="t mono" style="left:388.5px;top:154px;font-size:13.3px;line-height:20px"><span style="color:#9876aa;">$stmt</span><span style="color:#a9b7c6;">-&gt;</span><span style="color:#ffc66d;">execute</span><span style="color:#a9b7c6;">();</span></div>
<div class="t mono" style="left:388.5px;top:176px;font-size:13.3px;line-height:20px"><span style="color:#9876aa;">$results</span><span style="color:#a9b7c6;"> = </span><span style="color:#9876aa;">$stmt</span><span style="color:#a9b7c6;">-&gt;</span><span style="color:#ffc66d;">fetchAll</span><span style="color:#a9b7c6;">()</span><span style="color:#cc7832;">;</span></div>
<div style="position:absolute;left:2162px;top:87px;width:76px;height:22px;background:#2f3133;border-radius:3px"></div>
<svg style="left:2170px;top:92px" width="12" height="12"><circle cx="6" cy="6" r="6" fill="#c93b48"/><rect x="5.2" y="2.5" width="1.6" height="4.5" fill="#2b2b2b"/><rect x="5.2" y="8" width="1.6" height="1.6" fill="#2b2b2b"/></svg>
<div class="t" style="left:2184px;top:88px;font-size:12px;color:#bbbbbb">3</div>
<svg style="left:2202px;top:95px" width="10" height="6"><path d="M0.5 5.5L5 1L9.5 5.5" fill="none" stroke="#afb1b3" stroke-width="1.2"/></svg>
<svg style="left:2223px;top:95px" width="10" height="6"><path d="M0.5 0.5L5 5L9.5 0.5" fill="none" stroke="#afb1b3" stroke-width="1.2"/></svg>
<div style="position:absolute;left:2227px;top:132px;width:13px;height:2px;background:#bc3f3c"></div>
<div style="position:absolute;left:2227px;top:153px;width:13px;height:2px;background:#bc3f3c"></div>
<div style="position:absolute;left:331px;top:1334px;width:1909px;height:23px;background:#2d2e2f"></div>
<div style="position:absolute;left:331px;top:1334px;width:1909px;height:1px;background:#393b3c"></div>
<div style="position:absolute;left:2240px;top:57px;width:1px;height:1300px;background:#323232"></div>
<div style="position:absolute;left:2241px;top:57px;width:298px;height:1300px;background:#3c3f41"></div>
<div style="position:absolute;left:2241px;top:84px;width:298px;height:1px;background:#323232"></div>
<div style="position:absolute;left:2241px;top:112px;width:298px;height:1px;background:#323232"></div>
<div class="t" style="left:2247px;top:62px;font-size:12.3px;color:#bbbbbb">Database</div>
<svg style="left:2410px;top:64px" width="15" height="15"><circle cx="7.5" cy="7.5" r="6.3" fill="none" stroke="#afb1b3" stroke-width="1.5"/><path d="M7.5 1.5V5.5M7.5 9.5V13.5M1.5 7.5H5.5M9.5 7.5H13.5" stroke="#afb1b3" stroke-width="1.5"/></svg>
<svg style="left:2437px;top:64px" width="14" height="15"><path d="M0 1H14M0 14H14" stroke="#afb1b3" stroke-width="1.5"/><path d="M7 3L10.5 6.5H3.5ZM7 12L10.5 8.5H3.5Z" fill="#afb1b3"/></svg>
<svg style="left:2463px;top:64px" width="14" height="15"><path d="M0 7.5H14" stroke="#afb1b3" stroke-width="1.5"/><path d="M7 6L10.5 2.5H3.5ZM7 9L10.5 12.5H3.5Z" fill="#afb1b3"/></svg>
<div style="position:absolute;left:2483px;top:63px;width:1px;height:17px;background:#515151"></div>
<svg style="left:2493px;top:64px" width="14" height="14" viewBox="0 0 14 14"><path fill-rule="evenodd" d="M13.57 5.25 L13.57 8.75 L11.04 9.21 L10.93 9.39 L11.80 11.82 L8.77 13.57 L7.11 11.60 L6.89 11.60 L5.23 13.57 L2.20 11.82 L3.07 9.39 L2.96 9.21 L0.43 8.75 L0.43 5.25 L2.96 4.79 L3.07 4.61 L2.20 2.18 L5.23 0.43 L6.89 2.40 L7.11 2.40 L8.77 0.43 L11.80 2.18 L10.93 4.61 L11.04 4.79Z M7 4.9A2.1 2.1 0 1 0 7 9.1A2.1 2.1 0 1 0 7 4.9Z" fill="#afb1b3"/></svg>
<div style="position:absolute;left:2520px;top:70px;width:12px;height:2px;background:#afb1b3"></div>
<svg style="left:2250px;top:91px" width="16" height="17"><path d="M6 1V12M0.5 6.5H11.5" stroke="#afb1b3" stroke-width="1.8"/><path d="M10 13H15L12.5 16Z" fill="#afb1b3"/></svg>
<svg style="left:2275px;top:92px" width="14" height="14"><rect x="3" y="3" width="10" height="10" fill="#5f6163"/><path d="M1 11V1H11" fill="none" stroke="#5f6163" stroke-width="1.5"/></svg>
<div style="position:absolute;left:2298px;top:90px;width:1px;height:18px;background:#515151"></div>
<svg style="left:2308px;top:92px" width="15" height="15"><path d="M13 6A6 6 0 0 0 2 4M2 9A6 6 0 0 0 13 11" fill="none" stroke="#afb1b3" stroke-width="1.8"/><path d="M0 1V6H5ZM15 14V9H10Z" fill="#afb1b3"/></svg>
<svg style="left:2332px;top:91px" width="16" height="16"><ellipse cx="7" cy="3" rx="6" ry="2.3" fill="#afb1b3"/><path d="M1 5V12C1 14 13 14 13 12V5C13 7 1 7 1 5Z" fill="#afb1b3"/><path d="M8 15L15 8" stroke="#3c3f41" stroke-width="4"/><path d="M8 15L15 8" stroke="#afb1b3" stroke-width="2"/></svg>
<svg style="left:2357px;top:91px" width="16" height="16"><ellipse cx="7" cy="3" rx="6" ry="2.3" fill="#afb1b3"/><path d="M1 5V12C1 14 13 14 13 12V5C13 7 1 7 1 5Z" fill="#afb1b3"/><rect x="10" y="10" width="5" height="5" fill="#e05555"/></svg>
<div style="position:absolute;left:2383px;top:90px;width:1px;height:18px;background:#515151"></div>
<svg style="left:2392px;top:92px" width="15" height="14"><rect x="0.5" y="0.5" width="14" height="13" fill="none" stroke="#afb1b3"/><path d="M0 4.5H15M0 8.5H15M5 0V14M10 0V14" stroke="#afb1b3"/></svg>
<svg style="left:2418px;top:91px" width="15" height="16"><path d="M3 11L11 2L13 4L5 13H3Z" fill="#afb1b3"/><rect x="0" y="14" width="15" height="2" fill="#afb1b3"/></svg>
<svg style="left:2444px;top:91px" width="15" height="15"><path d="M1 14L7 8M7 8H3M7 8V12M14 1L8 7M8 7H12M8 7V3" fill="none" stroke="#3592c4" stroke-width="1.8"/></svg>
<svg style="left:2470px;top:92px" width="15" height="14"><rect x="0.5" y="0.5" width="14" height="13" fill="none" stroke="#afb1b3"/><rect x="0" y="0" width="15" height="3" fill="#afb1b3"/><text x="2" y="11.5" font-size="7" font-weight="bold" fill="#afb1b3" font-family="Liberation Sans">QL</text></svg>
<div style="position:absolute;left:2493px;top:90px;width:1px;height:18px;background:#515151"></div>
<svg style="left:2501px;top:92px" width="14" height="14"><path d="M0 0H14L9 6V14H5V6Z" fill="#afb1b3"/></svg>
<div style="position:absolute;left:2241px;top:113px;width:298px;height:1235px;overflow:hidden">
<svg style="left:7px;top:8px" width="10" height="6"><path d="M0.5 0.5L5 5L9.5 0.5" fill="none" stroke="#afb1b3" stroke-width="1.2"/></svg>
<svg style="left:23px;top:3px" width="18" height="16"><path d="M1 13C4 11 8 12 10 8C11 5 13 3 16 1C14 4 13 6 13 9L12 12" fill="none" stroke="#afb1b3" stroke-width="1.3"/><circle cx="14" cy="13" r="2" fill="#3fce45"/></svg>
<div class="t" style="left:46px;top:2px;font-size:11.3px;color:#bbb;text-decoration:underline wavy #be9117;text-decoration-thickness:1px;text-underline-offset:3px">stevensm_roleplay010@193.108.200.10</div>
<div style="position:absolute;left:255px;top:3px;width:33px;height:17px;border:1px solid #4d5052;border-radius:4px"></div>
<div class="t" style="left:258px;top:2px;font-size:11px;color:#787878">1 of 2</div>
<svg style="left:25px;top:28px" width="10" height="6"><path d="M0.5 0.5L5 5L9.5 0.5" fill="none" stroke="#afb1b3" stroke-width="1.2"/></svg>
<svg style="left:43px;top:23px" width="16" height="16"><rect x="7" y="1" width="8" height="6" fill="#3d8fb8"/><rect x="1" y="8" width="8" height="7" fill="#3d8fb8"/><path d="M4 8V4H7" fill="none" stroke="#afb1b3" stroke-width="1.3"/><rect x="9" y="9" width="6" height="6" fill="#afb1b3"/></svg>
<div class="t" style="left:64px;top:22px;font-size:11.4px;color:#bbb">stevensm_roleplay010</div>
<svg style="left:43px;top:48px" width="10" height="6"><path d="M0.5 0.5L5 5L9.5 0.5" fill="none" stroke="#afb1b3" stroke-width="1.2"/></svg>
<svg style="left:61px;top:44px" width="16" height="14"><path d="M1 1H6L7.5 3H15V12H1Z" fill="#3d8fb8"/></svg>
<div class="t" style="left:82px;top:42px;font-size:11.4px;color:#bbb">tables<span style="color:#808080">&nbsp;&nbsp;16</span></div>
<div style="position:absolute;left:0px;top:61px;width:298px;height:20px;background:#0d293e"></div>
<svg style="left:61px;top:68px" width="10" height="6"><path d="M0.5 0.5L5 5L9.5 0.5" fill="none" stroke="#afb1b3" stroke-width="1.2"/></svg>
<svg style="left:79px;top:64px" width="15" height="14"><rect x="0.5" y="0.5" width="14" height="13" fill="none" stroke="#afb1b3"/><path d="M0 4.5H15M0 8.5H15M5 0V14M10 0V14" stroke="#afb1b3"/></svg>
<div class="t" style="left:100px;top:62px;font-size:11.4px;color:#bbb">civilian_mutations</div>
<svg style="left:79px;top:88px" width="10" height="6"><path d="M0.5 0.5L5 5L9.5 0.5" fill="none" stroke="#afb1b3" stroke-width="1.2"/></svg>
<svg style="left:97px;top:84px" width="16" height="14"><path d="M1 1H6L7.5 3H15V12H1Z" fill="#3d8fb8"/></svg>
<div class="t" style="left:118px;top:82px;font-size:11.4px;color:#bbb">columns<span style="color:#808080">&nbsp;&nbsp;7</span></div>
<svg style="left:115px;top:104px" width="16" height="15"><rect x="0" y="0" width="3" height="11" fill="#3d8fb8"/><circle cx="1.5" cy="12.5" r="1.8" fill="#afb1b3"/><rect x="4.5" y="0.5" width="10" height="13" fill="none" stroke="#afb1b3"/><circle cx="11" cy="8" r="2.6" fill="#3c3f41" stroke="#e6a93c" stroke-width="1.6"/><path d="M11 10V15M11 13H13" stroke="#e6a93c" stroke-width="1.5"/></svg>
<div class="t" style="left:136px;top:102px;font-size:11.4px;color:#bbb">mutation_id<span style="color:#808080">&nbsp;&nbsp;int (auto increment)</span></div>
<svg style="left:115px;top:124px" width="15" height="14"><rect x="0" y="0" width="3" height="14" fill="#afb1b3"/><rect x="4.5" y="0.5" width="10" height="13" fill="none" stroke="#afb1b3"/><path d="M4.5 4.5H15M4.5 8.5H15M9.5 0V14" stroke="#afb1b3"/></svg>
<div class="t" style="left:136px;top:122px;font-size:11.4px;color:#bbb">mutation_main_id<span style="color:#808080">&nbsp;&nbsp;varchar(255)</span></div>
<svg style="left:115px;top:144px" width="15" height="14"><rect x="0" y="0" width="3" height="14" fill="#afb1b3"/><rect x="4.5" y="0.5" width="10" height="13" fill="none" stroke="#afb1b3"/><path d="M4.5 4.5H15M4.5 8.5H15M9.5 0V14" stroke="#afb1b3"/></svg>
<div class="t" style="left:136px;top:142px;font-size:11.4px;color:#bbb">mutation_identifier<span style="color:#808080">&nbsp;&nbsp;int</span></div>
<svg style="left:115px;top:164px" width="15" height="14"><rect x="0" y="0" width="3" height="14" fill="#afb1b3"/><rect x="4.5" y="0.5" width="10" height="13" fill="none" stroke="#afb1b3"/><path d="M4.5 4.5H15M4.5 8.5H15M9.5 0V14" stroke="#afb1b3"/></svg>
<div class="t" style="left:136px;top:162px;font-size:11.4px;color:#bbb">mutation_type<span style="color:#808080">&nbsp;&nbsp;varchar(255)</span></div>
<svg style="left:115px;top:184px" width="15" height="14"><rect x="0" y="0" width="3" height="14" fill="#afb1b3"/><rect x="4.5" y="0.5" width="10" height="13" fill="none" stroke="#afb1b3"/><path d="M4.5 4.5H15M4.5 8.5H15M9.5 0V14" stroke="#afb1b3"/></svg>
<div class="t" style="left:136px;top:182px;font-size:11.4px;color:#bbb">mutation_reason<span style="color:#808080">&nbsp;&nbsp;text</span></div>
<svg style="left:115px;top:204px" width="15" height="14"><rect x="0" y="0" width="3" height="14" fill="#afb1b3"/><rect x="4.5" y="0.5" width="10" height="13" fill="none" stroke="#afb1b3"/><path d="M4.5 4.5H15M4.5 8.5H15M9.5 0V14" stroke="#afb1b3"/></svg>
<div class="t" style="left:136px;top:202px;font-size:11.4px;color:#bbb">mutation_by<span style="color:#808080">&nbsp;&nbsp;int</span></div>
<svg style="left:115px;top:224px" width="15" height="14"><rect x="0" y="0" width="3" height="14" fill="#afb1b3"/><rect x="4.5" y="0.5" width="10" height="13" fill="none" stroke="#afb1b3"/><path d="M4.5 4.5H15M4.5 8.5H15M9.5 0V14" stroke="#afb1b3"/></svg>
<div class="t" style="left:136px;top:222px;font-size:11.4px;color:#bbb">mutation_on<span style="color:#808080">&nbsp;&nbsp;varchar(255)</span></div>
<svg style="left:81px;top:246px" width="6" height="10"><path d="M0.5 0.5L5 5L0.5 9.5" fill="none" stroke="#afb1b3" stroke-width="1.2"/></svg>
<svg style="left:97px;top:244px" width="16" height="14"><path d="M1 1H6L7.5 3H15V12H1Z" fill="#3d8fb8"/></svg>
<div class="t" style="left:118px;top:242px;font-size:11.4px;color:#bbb">keys<span style="color:#808080">&nbsp;&nbsp;1</span></div>
<svg style="left:81px;top:266px" width="6" height="10"><path d="M0.5 0.5L5 5L0.5 9.5" fill="none" stroke="#afb1b3" stroke-width="1.2"/></svg>
<svg style="left:97px;top:264px" width="16" height="14"><path d="M1 1H6L7.5 3H15V12H1Z" fill="#3d8fb8"/></svg>
<div class="t" style="left:118px;top:262px;font-size:11.4px;color:#bbb">indexes<span style="color:#808080">&nbsp;&nbsp;1</span></div>
<svg style="left:63px;top:286px" width="6" height="10"><path d="M0.5 0.5L5 5L0.5 9.5" fill="none" stroke="#afb1b3" stroke-width="1.2"/></svg>
<svg style="left:79px;top:284px" width="15" height="14"><rect x="0.5" y="0.5" width="14" height="13" fill="none" stroke="#afb1b3"/><path d="M0 4.5H15M0 8.5H15M5 0V14M10 0V14" stroke="#afb1b3"/></svg>
<div class="t" style="left:100px;top:282px;font-size:11.4px;color:#bbb">civilian_notes</div>
<svg style="left:63px;top:306px" width="6" height="10"><path d="M0.5 0.5L5 5L0.5 9.5" fill="none" stroke="#afb1b3" stroke-width="1.2"/></svg>
<svg style="left:79px;top:304px" width="15" height="14"><rect x="0.5" y="0.5" width="14" height="13" fill="none" stroke="#afb1b3"/><path d="M0 4.5H15M0 8.5H15M5 0V14M10 0V14" stroke="#afb1b3"/></svg>
<div class="t" style="left:100px;top:302px;font-size:11.4px;color:#bbb">civilians</div>
<svg style="left:63px;top:326px" width="6" height="10"><path d="M0.5 0.5L5 5L0.5 9.5" fill="none" stroke="#afb1b3" stroke-width="1.2"/></svg>
<svg style="left:79px;top:324px" width="15" height="14"><rect x="0.5" y="0.5" width="14" height="13" fill="none" stroke="#afb1b3"/><path d="M0 4.5H15M0 8.5H15M5 0V14M10 0V14" stroke="#afb1b3"/></svg>
<div class="t" style="left:100px;top:322px;font-size:11.4px;color:#bbb">danger_indications</div>
<svg style="left:63px;top:346px" width="6" height="10"><path d="M0.5 0.5L5 5L0.5 9.5" fill="none" stroke="#afb1b3" stroke-width="1.2"/></svg>
<svg style="left:79px;top:344px" width="15" height="14"><rect x="0.5" y="0.5" width="14" height="13" fill="none" stroke="#afb1b3"/><path d="M0 4.5H15M0 8.5H15M5 0V14M10 0V14" stroke="#afb1b3"/></svg>
<div class="t" style="left:100px;top:342px;font-size:11.4px;color:#bbb">driver_licenses</div>
<svg style="left:63px;top:366px" width="6" height="10"><path d="M0.5 0.5L5 5L0.5 9.5" fill="none" stroke="#afb1b3" stroke-width="1.2"/></svg>
<svg style="left:79px;top:364px" width="15" height="14"><rect x="0.5" y="0.5" width="14" height="13" fill="none" stroke="#afb1b3"/><path d="M0 4.5H15M0 8.5H15M5 0V14M10 0V14" stroke="#afb1b3"/></svg>
<div class="t" style="left:100px;top:362px;font-size:11.4px;color:#bbb">duty_notes</div>
<svg style="left:63px;top:386px" width="6" height="10"><path d="M0.5 0.5L5 5L0.5 9.5" fill="none" stroke="#afb1b3" stroke-width="1.2"/></svg>
<svg style="left:79px;top:384px" width="15" height="14"><rect x="0.5" y="0.5" width="14" height="13" fill="none" stroke="#afb1b3"/><path d="M0 4.5H15M0 8.5H15M5 0V14M10 0V14" stroke="#afb1b3"/></svg>
<div class="t" style="left:100px;top:382px;font-size:11.4px;color:#bbb">fines</div>
<svg style="left:63px;top:406px" width="6" height="10"><path d="M0.5 0.5L5 5L0.5 9.5" fill="none" stroke="#afb1b3" stroke-width="1.2"/></svg>
<svg style="left:79px;top:404px" width="15" height="14"><rect x="0.5" y="0.5" width="14" height="13" fill="none" stroke="#afb1b3"/><path d="M0 4.5H15M0 8.5H15M5 0V14M10 0V14" stroke="#afb1b3"/></svg>
<div class="t" style="left:100px;top:402px;font-size:11.4px;color:#bbb">groups</div>
<svg style="left:63px;top:426px" width="6" height="10"><path d="M0.5 0.5L5 5L0.5 9.5" fill="none" stroke="#afb1b3" stroke-width="1.2"/></svg>
<svg style="left:79px;top:424px" width="15" height="14"><rect x="0.5" y="0.5" width="14" height="13" fill="none" stroke="#afb1b3"/><path d="M0 4.5H15M0 8.5H15M5 0V14M10 0V14" stroke="#afb1b3"/></svg>
<div class="t" style="left:100px;top:422px;font-size:11.4px;color:#bbb">password_reset</div>
<svg style="left:63px;top:446px" width="6" height="10"><path d="M0.5 0.5L5 5L0.5 9.5" fill="none" stroke="#afb1b3" stroke-width="1.2"/></svg>
<svg style="left:79px;top:444px" width="15" height="14"><rect x="0.5" y="0.5" width="14" height="13" fill="none" stroke="#afb1b3"/><path d="M0 4.5H15M0 8.5H15M5 0V14M10 0V14" stroke="#afb1b3"/></svg>
<div class="t" style="left:100px;top:442px;font-size:11.4px;color:#bbb">personal_notes</div>
<svg style="left:61px;top:468px" width="10" height="6"><path d="M0.5 0.5L5 5L9.5 0.5" fill="none" stroke="#afb1b3" stroke-width="1.2"/></svg>
<svg style="left:79px;top:464px" width="15" height="14"><rect x="0.5" y="0.5" width="14" height="13" fill="none" stroke="#afb1b3"/><path d="M0 4.5H15M0 8.5H15M5 0V14M10 0V14" stroke="#afb1b3"/></svg>
<div class="t" style="left:100px;top:462px;font-size:11.4px;color:#bbb">request_for_arrests</div>
<svg style="left:79px;top:488px" width="10" height="6"><path d="M0.5 0.5L5 5L9.5 0.5" fill="none" stroke="#afb1b3" stroke-width="1.2"/></svg>
<svg style="left:97px;top:484px" width="16" height="14"><path d="M1 1H6L7.5 3H15V12H1Z" fill="#3d8fb8"/></svg>
<div class="t" style="left:118px;top:482px;font-size:11.4px;color:#bbb">columns<span style="color:#808080">&nbsp;&nbsp;11</span></div>
<svg style="left:115px;top:504px" width="16" height="15"><rect x="0" y="0" width="3" height="11" fill="#3d8fb8"/><circle cx="1.5" cy="12.5" r="1.8" fill="#afb1b3"/><rect x="4.5" y="0.5" width="10" height="13" fill="none" stroke="#afb1b3"/><circle cx="11" cy="8" r="2.6" fill="#3c3f41" stroke="#e6a93c" stroke-width="1.6"/><path d="M11 10V15M11 13H13" stroke="#e6a93c" stroke-width="1.5"/></svg>
<div class="t" style="left:136px;top:502px;font-size:11.4px;color:#bbb">id<span style="color:#808080">&nbsp;&nbsp;int (auto increment)</span></div>
<svg style="left:115px;top:524px" width="15" height="14"><rect x="0" y="0" width="3" height="14" fill="#afb1b3"/><rect x="4.5" y="0.5" width="10" height="13" fill="none" stroke="#afb1b3"/><path d="M4.5 4.5H15M4.5 8.5H15M9.5 0V14" stroke="#afb1b3"/></svg>
<div class="t" style="left:136px;top:522px;font-size:11.4px;color:#bbb">vta_main_id<span style="color:#808080">&nbsp;&nbsp;varchar(255)</span></div>
<svg style="left:115px;top:544px" width="15" height="14"><rect x="0" y="0" width="3" height="14" fill="#afb1b3"/><rect x="4.5" y="0.5" width="10" height="13" fill="none" stroke="#afb1b3"/><path d="M4.5 4.5H15M4.5 8.5H15M9.5 0V14" stroke="#afb1b3"/></svg>
<div class="t" style="left:136px;top:542px;font-size:11.4px;color:#bbb">vta_suspect_identifier<span style="color:#808080">&nbsp;&nbsp;int</span></div>
<svg style="left:115px;top:564px" width="15" height="14"><rect x="0" y="0" width="3" height="14" fill="#afb1b3"/><rect x="4.5" y="0.5" width="10" height="13" fill="none" stroke="#afb1b3"/><path d="M4.5 4.5H15M4.5 8.5H15M9.5 0V14" stroke="#afb1b3"/></svg>
<div class="t" style="left:136px;top:562px;font-size:11.4px;color:#bbb">vta_suspect_description<span style="color:#808080">&nbsp;&nbsp;text</span></div>
<svg style="left:115px;top:584px" width="15" height="14"><rect x="0" y="0" width="3" height="14" fill="#afb1b3"/><rect x="4.5" y="0.5" width="10" height="13" fill="none" stroke="#afb1b3"/><path d="M4.5 4.5H15M4.5 8.5H15M9.5 0V14" stroke="#afb1b3"/></svg>
<div class="t" style="left:136px;top:582px;font-size:11.4px;color:#bbb">vta_nationality<span style="color:#808080">&nbsp;&nbsp;varchar(255)</span></div>
<svg style="left:115px;top:604px" width="15" height="14"><rect x="0" y="0" width="3" height="14" fill="#afb1b3"/><rect x="4.5" y="0.5" width="10" height="13" fill="none" stroke="#afb1b3"/><path d="M4.5 4.5H15M4.5 8.5H15M9.5 0V14" stroke="#afb1b3"/></svg>
<div class="t" style="left:136px;top:602px;font-size:11.4px;color:#bbb">vta_proof<span style="color:#808080">&nbsp;&nbsp;text</span></div>
<svg style="left:115px;top:624px" width="15" height="14"><rect x="0" y="0" width="3" height="14" fill="#afb1b3"/><rect x="4.5" y="0.5" width="10" height="13" fill="none" stroke="#afb1b3"/><path d="M4.5 4.5H15M4.5 8.5H15M9.5 0V14" stroke="#afb1b3"/></svg>
<div class="t" style="left:136px;top:622px;font-size:11.4px;color:#bbb">vta_reason<span style="color:#808080">&nbsp;&nbsp;text</span></div>
<svg style="left:115px;top:644px" width="15" height="14"><rect x="0" y="0" width="3" height="14" fill="#afb1b3"/><rect x="4.5" y="0.5" width="10" height="13" fill="none" stroke="#afb1b3"/><path d="M4.5 4.5H15M4.5 8.5H15M9.5 0V14" stroke="#afb1b3"/></svg>
<div class="t" style="left:136px;top:642px;font-size:11.4px;color:#bbb">vta_penalty_requirement<span style="color:#808080">&nbsp;&nbsp;varchar(255)</span></div>
<svg style="left:115px;top:664px" width="15" height="14"><rect x="0" y="0" width="3" height="14" fill="#afb1b3"/><rect x="4.5" y="0.5" width="10" height="13" fill="none" stroke="#afb1b3"/><path d="M4.5 4.5H15M4.5 8.5H15M9.5 0V14" stroke="#afb1b3"/></svg>
<div class="t" style="left:136px;top:662px;font-size:11.4px;color:#bbb">vta_findings<span style="color:#808080">&nbsp;&nbsp;text</span></div>
<svg style="left:115px;top:684px" width="15" height="14"><rect x="0" y="0" width="3" height="14" fill="#afb1b3"/><rect x="4.5" y="0.5" width="10" height="13" fill="none" stroke="#afb1b3"/><path d="M4.5 4.5H15M4.5 8.5H15M9.5 0V14" stroke="#afb1b3"/></svg>
<div class="t" style="left:136px;top:682px;font-size:11.4px;color:#bbb">vta_created_by<span style="color:#808080">&nbsp;&nbsp;int</span></div>
<svg style="left:115px;top:704px" width="15" height="14"><rect x="0" y="0" width="3" height="14" fill="#afb1b3"/><rect x="4.5" y="0.5" width="10" height="13" fill="none" stroke="#afb1b3"/><path d="M4.5 4.5H15M4.5 8.5H15M9.5 0V14" stroke="#afb1b3"/></svg>
<div class="t" style="left:136px;top:702px;font-size:11.4px;color:#bbb">vta_created_on<span style="color:#808080">&nbsp;&nbsp;varchar(255)</span></div>
<svg style="left:81px;top:726px" width="6" height="10"><path d="M0.5 0.5L5 5L0.5 9.5" fill="none" stroke="#afb1b3" stroke-width="1.2"/></svg>
<svg style="left:97px;top:724px" width="16" height="14"><path d="M1 1H6L7.5 3H15V12H1Z" fill="#3d8fb8"/></svg>
<div class="t" style="left:118px;top:722px;font-size:11.4px;color:#bbb">keys<span style="color:#808080">&nbsp;&nbsp;1</span></div>
<svg style="left:81px;top:746px" width="6" height="10"><path d="M0.5 0.5L5 5L0.5 9.5" fill="none" stroke="#afb1b3" stroke-width="1.2"/></svg>
<svg style="left:97px;top:744px" width="16" height="14"><path d="M1 1H6L7.5 3H15V12H1Z" fill="#3d8fb8"/></svg>
<div class="t" style="left:118px;top:742px;font-size:11.4px;color:#bbb">indexes<span style="color:#808080">&nbsp;&nbsp;1</span></div>
<svg style="left:63px;top:766px" width="6" height="10"><path d="M0.5 0.5L5 5L0.5 9.5" fill="none" stroke="#afb1b3" stroke-width="1.2"/></svg>
<svg style="left:79px;top:764px" width="15" height="14"><rect x="0.5" y="0.5" width="14" height="13" fill="none" stroke="#afb1b3"/><path d="M0 4.5H15M0 8.5H15M5 0V14M10 0V14" stroke="#afb1b3"/></svg>
<div class="t" style="left:100px;top:762px;font-size:11.4px;color:#bbb">sex</div>
<svg style="left:63px;top:786px" width="6" height="10"><path d="M0.5 0.5L5 5L0.5 9.5" fill="none" stroke="#afb1b3" stroke-width="1.2"/></svg>
<svg style="left:79px;top:784px" width="15" height="14"><rect x="0.5" y="0.5" width="14" height="13" fill="none" stroke="#afb1b3"/><path d="M0 4.5H15M0 8.5H15M5 0V14M10 0V14" stroke="#afb1b3"/></svg>
<div class="t" style="left:100px;top:782px;font-size:11.4px;color:#bbb">users</div>
<svg style="left:63px;top:806px" width="6" height="10"><path d="M0.5 0.5L5 5L0.5 9.5" fill="none" stroke="#afb1b3" stroke-width="1.2"/></svg>
<svg style="left:79px;top:804px" width="15" height="14"><rect x="0.5" y="0.5" width="14" height="13" fill="none" stroke="#afb1b3"/><path d="M0 4.5H15M0 8.5H15M5 0V14M10 0V14" stroke="#afb1b3"/></svg>
<div class="t" style="left:100px;top:802px;font-size:11.4px;color:#bbb">vehicle_mutations</div>
<svg style="left:63px;top:826px" width="6" height="10"><path d="M0.5 0.5L5 5L0.5 9.5" fill="none" stroke="#afb1b3" stroke-width="1.2"/></svg>
<svg style="left:79px;top:824px" width="15" height="14"><rect x="0.5" y="0.5" width="14" height="13" fill="none" stroke="#afb1b3"/><path d="M0 4.5H15M0 8.5H15M5 0V14M10 0V14" stroke="#afb1b3"/></svg>
<div class="t" style="left:100px;top:822px;font-size:11.4px;color:#bbb">vehicle_notes</div>
<svg style="left:63px;top:846px" width="6" height="10"><path d="M0.5 0.5L5 5L0.5 9.5" fill="none" stroke="#afb1b3" stroke-width="1.2"/></svg>
<svg style="left:79px;top:844px" width="15" height="14"><rect x="0.5" y="0.5" width="14" height="13" fill="none" stroke="#afb1b3"/><path d="M0 4.5H15M0 8.5H15M5 0V14M10 0V14" stroke="#afb1b3"/></svg>
<div class="t" style="left:100px;top:842px;font-size:11.4px;color:#bbb">vehicles</div>
<svg style="left:27px;top:866px" width="6" height="10"><path d="M0.5 0.5L5 5L0.5 9.5" fill="none" stroke="#afb1b3" stroke-width="1.2"/></svg>
<svg style="left:43px;top:863px" width="16" height="16"><path d="M1 1H6L7.5 3H13V14H1Z" fill="#afb1b3"/><rect x="8" y="7" width="8" height="9" fill="#3c3f41"/><path d="M9 9H16M9 11.5H16M9 14H16" stroke="#3d8fb8" stroke-width="1.4"/></svg>
<div class="t" style="left:64px;top:862px;font-size:11.4px;color:#bbb">Server Objects</div>
</div>
<div style="position:absolute;left:2242px;top:1348px;width:260px;height:8px;background:#505354;border-radius:1px"></div>
<div style="position:absolute;left:0px;top:1357px;width:2560px;height:1px;background:#323232"></div>
<div style="position:absolute;left:0px;top:1358px;width:2560px;height:21px;background:#3c3f41"></div>
<div style="position:absolute;left:0px;top:1379px;width:2560px;height:1px;background:#323232"></div>
<svg style="left:31px;top:1363px" width="10" height="13"><path d="M2 0V13M2 3C8 3 8 7 8 10" fill="none" stroke="#afb1b3" stroke-width="1.6"/></svg>
<div class="t" style="left:47px;top:1360px;font-size:11.2px;color:#bbb">Git</div>
<svg style="left:82px;top:1364px" width="11" height="10"><path d="M0 1H2M0 5H2M0 9H2M4 1H11M4 5H11M4 9H11" stroke="#afb1b3" stroke-width="1.5"/></svg>
<div class="t" style="left:98px;top:1360px;font-size:11.2px;color:#bbb">TODO</div>
<svg style="left:150px;top:1363px" width="12" height="12"><circle cx="6" cy="6" r="6" fill="#afb1b3"/><rect x="5.2" y="2.5" width="1.6" height="4.5" fill="#3c3f41"/><rect x="5.2" y="8" width="1.6" height="1.6" fill="#3c3f41"/></svg>
<div class="t" style="left:167px;top:1360px;font-size:11.2px;color:#bbb">Problems</div>
<svg style="left:235px;top:1363px" width="12" height="11"><rect x="0" y="0" width="12" height="11" fill="#afb1b3"/><path d="M2 3L5 5.5L2 8" fill="none" stroke="#3c3f41" stroke-width="1.3"/></svg>
<div class="t" style="left:251.6px;top:1360px;font-size:11.2px;color:#bbb">Terminal</div>
<svg style="left:317px;top:1363px" width="12" height="12"><circle cx="6" cy="6" r="5.3" fill="none" stroke="#6e7072" stroke-width="1.3"/><path d="M6 0.7V6H11.3" fill="none" stroke="#6e7072" stroke-width="1.3"/></svg>
<div class="t" style="left:334px;top:1360px;font-size:11.2px;color:#bbb">Statistic</div>
<svg style="left:394px;top:1362px" width="12" height="13"><path d="M6 0L12 3.3V9.7L6 13L0 9.7V3.3Z" fill="#afb1b3"/><path d="M4.5 4L8.5 6.5L4.5 9Z" fill="#3c3f41"/></svg>
<div class="t" style="left:411px;top:1360px;font-size:11.2px;color:#bbb">Services</div>
<div style="position:absolute;left:0px;top:1380px;width:2560px;height:20px;background:#3c3f41"></div>
<svg style="left:6px;top:1384px" width="13" height="12"><rect x="3.5" y="0.5" width="9" height="8" fill="none" stroke="#afb1b3"/><path d="M0.5 3V11.5H9.5" fill="none" stroke="#afb1b3"/></svg>
<div class="t" style="left:27px;top:1380.5px;font-size:11.5px;color:#bbb">stevensm_roleplay010@193.108.200.10: Synchronization successful (1 sec, 611 ms) (23 minutes ago)</div>
<div class="t" style="left:2231px;top:1380px;font-size:12px;color:#bbb">PHP: 8.1</div>
<div class="t" style="left:2287px;top:1380px;font-size:12px;color:#bbb">5:30</div>
<div class="t" style="left:2320px;top:1380px;font-size:12px;color:#bbb">CRLF</div>
<div class="t" style="left:2359px;top:1380px;font-size:12px;color:#bbb">UTF-8</div>
<div class="t" style="left:2401px;top:1380px;font-size:12px;color:#bbb">4 spaces</div>
<div class="t" style="left:2475px;top:1380px;font-size:12px;color:#bbb">main</div>
<svg style="left:2459px;top:1384px" width="10" height="13"><path d="M2 0V13M2 3C8 3 8 7 8 10" fill="none" stroke="#afb1b3" stroke-width="1.6"/></svg>
<svg style="left:2512px;top:1384px" width="12" height="13"><path d="M3 6V3A3 3 0 0 1 9 3" fill="none" stroke="#afb1b3" stroke-width="1.4"/><rect x="4" y="6" width="8" height="7" fill="#afb1b3"/></svg>
<svg style="left:2535px;top:1383px" width="17" height="14"><path d="M4 10A3.5 3.5 0 0 1 4 3A5 5 0 0 1 13 4A3 3 0 0 1 13 10Z" fill="#afb1b3"/><circle cx="13" cy="11" r="2.5" fill="#3c3f41" stroke="#afb1b3" stroke-width="1.2"/></svg>
</div>
<div style="position:absolute;left:2560px;top:247px;width:1920px;height:1080px;overflow:hidden;background:#fff">
<div style="position:absolute;left:0px;top:0px;width:1920px;height:33px;background:#dee1e6"></div>
<div style="position:absolute;left:8px;top:1px;width:240px;height:32px;background:#fff;border-radius:8px 8px 0 0"></div>
<svg style="left:0px;top:25px" width="8" height="8"><path d="M0 8A8 8 0 0 0 8 0V8Z" fill="#fff"/></svg>
<svg style="left:248px;top:25px" width="8" height="8"><path d="M8 8A8 8 0 0 1 0 0V8Z" fill="#fff"/></svg>
<svg style="left:20px;top:9px" width="16" height="16" viewBox="0 0 16 16"><rect width="16" height="16" fill="#154b8b"/><path d="M3.5 9L8 5.5L12.5 9L8 13Z" fill="#fff"/><path d="M8 2.5C6.5 4 6.5 6 8 8C9.5 6.5 9.5 4.5 8 2.5Z" fill="#fff"/><circle cx="8" cy="9.5" r="1" fill="#154b8b"/></svg>
<div class="t" style="left:44px;top:7px;font-size:11.6px;color:#3c4043">Persoon | Roleplay010 MEOS</div>
<svg style="left:228px;top:12px" width="10" height="10"><path d="M1 1L9 9M9 1L1 9" stroke="#5f6368" stroke-width="1.5"/></svg>
<svg style="left:259px;top:9px" width="16" height="16" viewBox="0 0 16 16"><rect width="16" height="16" fill="#154b8b"/><path d="M3.5 9L8 5.5L12.5 9L8 13Z" fill="#fff"/><path d="M8 2.5C6.5 4 6.5 6 8 8C9.5 6.5 9.5 4.5 8 2.5Z" fill="#fff"/><circle cx="8" cy="9.5" r="1" fill="#154b8b"/></svg>
<div class="t" style="left:283px;top:7px;width:172px;overflow:hidden;font-size:11.6px;color:#3c4043;-webkit-mask-image:linear-gradient(90deg,#000 85%,transparent)">Basisadministratie | Roleplay010 MEOS</div>
<svg style="left:466px;top:12px" width="10" height="10"><path d="M1 1L9 9M9 1L1 9" stroke="#5f6368" stroke-width="1.5"/></svg>
<div style="position:absolute;left:486px;top:8px;width:1px;height:19px;background:#9aa0a6"></div>
<svg style="left:503px;top:11px" width="12" height="12"><path d="M6 0V12M0 6H12" stroke="#3c4043" stroke-width="1.6"/></svg>
<svg style="left:1754px;top:11px" width="10" height="6"><path d="M0.5 0.5L5 5L9.5 0.5" fill="none" stroke="#3c4043" stroke-width="1.2"/></svg>
<div style="position:absolute;left:1799px;top:14px;width:11px;height:1px;background:#3c4043"></div>
<svg style="left:1846px;top:9px" width="11" height="11"><rect x="0.5" y="2.5" width="8" height="8" fill="none" stroke="#3c4043"/><path d="M2.5 2.5V0.5H10.5V8.5H8.5" fill="none" stroke="#3c4043"/></svg>
<svg style="left:1892px;top:9px" width="11" height="11"><path d="M0 0L11 11M11 0L0 11" stroke="#3c4043" stroke-width="1.2"/></svg>
<div style="position:absolute;left:0px;top:33px;width:1920px;height:38px;background:#fff"></div>
<svg style="left:15px;top:45px" width="14" height="14"><path d="M13 7H2M7 1.5L1.5 7L7 12.5" fill="none" stroke="#5f6368" stroke-width="1.8"/></svg>
<svg style="left:47px;top:45px" width="14" height="14"><path d="M1 7H12M7 1.5L12.5 7L7 12.5" fill="none" stroke="#b5b8bb" stroke-width="1.8"/></svg>
<svg style="left:79px;top:44px" width="15" height="15"><path d="M12.5 8A5.5 5.5 0 1 1 10.5 3.5" fill="none" stroke="#5f6368" stroke-width="1.8"/><path d="M8.5 0.5H13.5V5.5Z" fill="#5f6368"/></svg>
<div style="position:absolute;left:108px;top:38px;width:1383px;height:29px;background:#f1f3f4;border-radius:14.5px"></div>
<svg style="left:119px;top:45px" width="14" height="14"><circle cx="7" cy="7" r="6" fill="none" stroke="#5f6368" stroke-width="1.4"/><rect x="6.3" y="6" width="1.5" height="4.5" fill="#5f6368"/><rect x="6.3" y="3.3" width="1.5" height="1.5" fill="#5f6368"/></svg>
<div class="t" style="left:142.7px;top:42px;font-size:14.2px;color:#5f6368"><span style="color:#202124">localhost</span>/roleplay010/roleplay010/persoon.php?i=1</div>
<svg style="left:1434px;top:44px" width="16" height="16"><path d="M2 7V14H13V10" fill="none" stroke="#5f6368" stroke-width="1.5"/><path d="M5 10C5 6 8 4 12 4M9 1L12.5 4L9 7" fill="none" stroke="#5f6368" stroke-width="1.5"/></svg>
<svg style="left:1466px;top:43px" width="17" height="17"><path d="M8.5 1.5L10.6 6.2L15.6 6.6L11.8 9.9L13 14.9L8.5 12.2L4 14.9L5.2 9.9L1.4 6.6L6.4 6.2Z" fill="none" stroke="#5f6368" stroke-width="1.4"/></svg>
<svg style="left:1506px;top:44px" width="17" height="17"><path d="M5 0H12L17 5V12L12 17H5L0 12V5Z" fill="#e0283a"/><text x="1.5" y="11" font-size="6" font-weight="bold" fill="#fff" font-family="Liberation Sans">ABP</text></svg>
<svg style="left:1538px;top:44px" width="17" height="17"><rect width="17" height="17" rx="4" fill="#8e8e8e"/><text x="4.5" y="13.5" font-size="13" font-weight="bold" fill="#fff" font-family="Liberation Sans">?</text></svg>
<svg style="left:1570px;top:45px" width="17" height="15"><path d="M2 15V6A6.5 6 0 0 1 15 6V15Z" fill="#111"/><circle cx="5.5" cy="9" r="2.5" fill="#fff"/><circle cx="11.5" cy="9" r="2.5" fill="#fff"/></svg>
<svg style="left:1602px;top:43px" width="22" height="20"><rect x="0" y="1" width="17" height="14" rx="2" fill="#d7262a"/><circle cx="5" cy="7" r="1.3" fill="#fff"/><circle cx="8.5" cy="7" r="1.3" fill="#fff"/><circle cx="12" cy="7" r="1.3" fill="#fff"/><rect x="9" y="10" width="12" height="10" rx="2" fill="#3c3c3c"/><text x="12" y="18.5" font-size="8.5" font-weight="bold" fill="#fff" font-family="Liberation Sans">2</text></svg>
<svg style="left:1634px;top:44px" width="17" height="17"><circle cx="8.5" cy="8.5" r="6" fill="none" stroke="#777" stroke-width="3.5" stroke-dasharray="2.5 1.6"/><circle cx="8.5" cy="8.5" r="4.5" fill="#9a9a9a"/><circle cx="8.5" cy="8.5" r="2" fill="#fff"/></svg>
<svg style="left:1665px;top:44px" width="17" height="17"><circle cx="8.5" cy="8.5" r="8" fill="#e33"/><path d="M8.5 8.5L8.5 0.5A8 8 0 0 1 16.5 8.5Z" fill="#fc0"/><path d="M8.5 8.5L16.5 8.5A8 8 0 0 1 8.5 16.5Z" fill="#3b3"/><path d="M8.5 8.5L8.5 16.5A8 8 0 0 1 0.5 8.5Z" fill="#36f"/><circle cx="8.5" cy="8.5" r="2.5" fill="#fff"/></svg>
<svg style="left:1697px;top:44px" width="18" height="17"><rect width="18" height="17" fill="#1a73e8"/><path d="M2 13L7 8L10 11L16 4" fill="none" stroke="#fff" stroke-width="1.6"/></svg>
<svg style="left:1729px;top:44px" width="17" height="17"><circle cx="8.5" cy="8.5" r="8.5" fill="#8ab4f8"/><circle cx="7.5" cy="7.5" r="3.5" fill="none" stroke="#fff" stroke-width="1.6"/><path d="M10 10L13 13" stroke="#fff" stroke-width="1.8"/></svg>
<svg style="left:1761px;top:44px" width="17" height="17"><path d="M0 0H17V12L8.5 17L0 12Z" fill="#2f80ed"/><text x="3" y="12.5" font-size="11" font-weight="bold" fill="#fff" font-family="Liberation Sans">FI</text></svg>
<svg style="left:1794px;top:44px" width="17" height="17"><path d="M2 5H6A2 2 0 0 1 10 5H14V9A2 2 0 0 1 14 13V16H2V12A2 2 0 0 0 2 8Z" fill="#5f6368"/></svg>
<svg style="left:1826px;top:45px" width="16" height="15"><rect x="0.8" y="0.8" width="14.4" height="13.4" fill="none" stroke="#5f6368" stroke-width="1.6"/><rect x="9" y="1" width="6" height="13" fill="#5f6368"/></svg>
<svg style="left:1857px;top:41px" width="20" height="22"><circle cx="10" cy="12" r="9.5" fill="#6aa84f"/><rect x="5" y="6" width="11" height="8" fill="#3e6b2c"/><rect x="8" y="8" width="6" height="4" fill="#e8c84a"/><path d="M2 4L6 8M18 3L14 8" stroke="#333" stroke-width="1.5"/></svg>
<div style="position:absolute;left:1896.5px;top:46px;width:3px;height:3px;background:#5f6368;border-radius:2px"></div>
<div style="position:absolute;left:1896.5px;top:51.5px;width:3px;height:3px;background:#5f6368;border-radius:2px"></div>
<div style="position:absolute;left:1896.5px;top:57px;width:3px;height:3px;background:#5f6368;border-radius:2px"></div>
<div style="position:absolute;left:0px;top:71px;width:1920px;height:31px;background:#fff"></div>
<div style="position:absolute;left:0px;top:101px;width:1920px;height:1px;background:#dadce0"></div>
<svg style="left:14px;top:77px" width="16" height="16" viewBox="0 0 16 16"><rect width="16" height="16" fill="#154b8b"/><path d="M3.5 9L8 5.5L12.5 9L8 13Z" fill="#fff"/><path d="M8 2.5C6.5 4 6.5 6 8 8C9.5 6.5 9.5 4.5 8 2.5Z" fill="#fff"/><circle cx="8" cy="9.5" r="1" fill="#154b8b"/></svg>
<div class="t" style="left:38px;top:73.5px;font-size:11.8px;color:#3c4043">Dashboard - Politie...</div>
<svg style="left:165px;top:77px" width="16" height="16"><path d="M2 3L8 1L15 3V8C15 12 8 15 8 15C8 15 2 12 2 8Z" fill="#3fbf6f"/><path d="M4 8L7 11L13 4" fill="none" stroke="#fff" stroke-width="1.6"/></svg>
<div class="t" style="left:189px;top:73.5px;font-size:11.8px;color:#3c4043">RAVR - Home</div>
<svg style="left:278px;top:77px" width="16" height="16"><path d="M15.5 3.5C14.9 3.8 14.3 3.9 13.7 4C14.3 3.6 14.8 3 15 2.3C14.4 2.7 13.7 2.9 13 3.1C12.4 2.4 11.6 2 10.6 2C8.8 2 7.4 3.5 7.4 5.3C7.4 5.5 7.4 5.8 7.5 6C4.8 5.9 2.4 4.6 0.8 2.6C0.5 3.1 0.4 3.6 0.4 4.2C0.4 5.3 1 6.3 1.8 6.9C1.3 6.9 0.8 6.7 0.4 6.5C0.4 8.1 1.5 9.4 3 9.7C2.7 9.8 2.4 9.8 2.1 9.8C1.9 9.8 1.7 9.8 1.5 9.8C1.9 11.1 3.1 12.1 4.6 12.1C3.5 13 2 13.5 0.5 13.5C0.3 13.5 0 13.5 0 13.5C1.5 14.4 3.2 15 5 15C10.6 15 13.7 10.3 13.7 6.3V5.9C14.6 5.3 15.1 4.5 15.5 3.5Z" fill="#1d9bf0"/></svg>
<div class="t" style="left:302px;top:73.5px;font-size:11.8px;color:#3c4043">Twitter</div>
<svg style="left:353px;top:77px" width="16" height="16"><path d="M15 8.2C15 7.7 15 7.2 14.9 6.7H8V9.5H12C11.8 10.4 11.3 11.2 10.5 11.7V13.5H12.9C14.2 12.3 15 10.4 15 8.2Z" fill="#4285f4"/><path d="M8 15C10 15 11.7 14.3 12.9 13.5L10.5 11.7C9.8 12.2 9 12.4 8 12.4C6 12.4 4.4 11.1 3.8 9.3H1.4V11.2C2.6 13.5 5.1 15 8 15Z" fill="#34a853"/><path d="M3.8 9.3C3.6 8.8 3.5 8.4 3.5 7.9C3.5 7.4 3.6 6.9 3.8 6.5V4.6H1.4C0.9 5.6 0.6 6.7 0.6 7.9C0.6 9.1 0.9 10.2 1.4 11.2Z" fill="#fbbc05"/><path d="M8 3.4C9.1 3.4 10 3.8 10.8 4.5L12.9 2.4C11.7 1.3 10 0.6 8 0.6C5.1 0.6 2.6 2.3 1.4 4.6L3.8 6.5C4.4 4.7 6 3.4 8 3.4Z" fill="#ea4335"/></svg>
<div class="t" style="left:378px;top:73.5px;font-size:11.8px;color:#3c4043">Google</div>
<svg style="left:433px;top:77px" width="16" height="16"><path d="M11 8.5C11 6.8 12.4 6 12.5 5.9C11.7 4.7 10.4 4.6 10 4.6C8.9 4.5 7.9 5.2 7.4 5.2C6.8 5.2 6 4.6 5.1 4.6C3.9 4.7 2.8 5.3 2.2 6.4C1 8.5 1.9 11.6 3.1 13.3C3.6 14.1 4.3 15 5.1 15C5.9 15 6.2 14.5 7.2 14.5C8.1 14.5 8.4 15 9.3 15C10.2 15 10.7 14.2 11.3 13.4C11.9 12.5 12.2 11.6 12.2 11.5C12.2 11.5 11 11 11 8.5ZM9.3 3.5C9.8 2.9 10.1 2.1 10 1.3C9.3 1.3 8.5 1.8 8 2.4C7.6 2.9 7.2 3.7 7.3 4.5C8.1 4.5 8.8 4.1 9.3 3.5Z" fill="#555"/></svg>
<div class="t" style="left:457px;top:73.5px;font-size:11.8px;color:#3c4043">iCloud</div>
<svg style="left:508px;top:77px" width="16" height="16"><rect x="0" y="3" width="16" height="11" rx="3" fill="#f00"/><path d="M6.5 6L10.5 8.5L6.5 11Z" fill="#fff"/></svg>
<div class="t" style="left:532px;top:73.5px;font-size:11.8px;color:#3c4043">YouTube</div>
<svg style="left:594px;top:77px" width="16" height="16"><circle cx="8" cy="8" r="7" fill="#5f6368"/><path d="M4 4C6 5 5 7 7 8C9 9 8 12 6 14M10 2C10 4 12 5 13 6C11 8 13 10 12 13" fill="none" stroke="#fff" stroke-width="1.3"/></svg>
<div class="t" style="left:618px;top:73.5px;font-size:11.8px;color:#3c4043">WHMCS - Uw overz...</div>
<svg style="left:748px;top:77px" width="16" height="16"><path d="M1 10L10 3L15 6V12H1Z" fill="#f6c343"/><circle cx="6" cy="10" r="1" fill="#e09b1c"/><circle cx="11" cy="9" r="1.2" fill="#e09b1c"/></svg>
<div class="t" style="left:772px;top:73.5px;font-size:11.8px;color:#3c4043">KaasHosting</div>
<svg style="left:854px;top:77px" width="16" height="16"><path d="M1 6L8 2L15 6L8 10Z" fill="#5b8dd6"/><path d="M1 9L8 13L15 9M1 7.5L8 11.5L15 7.5" fill="none" stroke="#3a6fc0" stroke-width="1.2"/></svg>
<div class="t" style="left:877.7px;top:73.5px;font-size:11.8px;color:#3c4043">Wiki</div>
<svg style="left:917px;top:77px" width="16" height="16"><rect x="1" y="1" width="14" height="14" rx="1" fill="#fff" stroke="#4285f4" stroke-width="1.6"/><rect x="1" y="1" width="14" height="3" fill="#4285f4"/><text x="3" y="12.5" font-size="7" font-weight="bold" fill="#4285f4" font-family="Liberation Sans">30</text><path d="M11 15L15 11V15Z" fill="#ea4335"/></svg>
<div class="t" style="left:941.8px;top:73.5px;font-size:11.8px;color:#3c4043">Google Agenda</div>
<svg style="left:1044px;top:77px" width="16" height="16"><circle cx="8" cy="8" r="7.5" fill="#1e3050"/><text x="2.2" y="10.2" font-size="5.5" font-weight="bold" fill="#fff" font-family="Liberation Sans">pay</text></svg>
<div class="t" style="left:1068px;top:73.5px;font-size:11.8px;color:#3c4043">Pay.nl [Dashboard]</div>
<svg style="left:1183px;top:77px" width="16" height="16"><path d="M2 1H11L14 4V15H2Z" fill="#fdd663"/></svg>
<div class="t" style="left:1207px;top:73.5px;font-size:11.8px;color:#3c4043">KH Dev</div>
<svg style="left:1263px;top:77px" width="16" height="16"><path d="M4 2C2 2 3 7 1 8C3 9 2 14 4 14M12 2C14 2 13 7 15 8C13 9 14 14 12 14" fill="none" stroke="#7f3fff" stroke-width="1.6"/><path d="M6 7L7 9L8 7L9 9L10 7" fill="none" stroke="#7f3fff" stroke-width="1.2"/></svg>
<div class="t" style="left:1287px;top:73.5px;font-size:11.8px;color:#3c4043">Exercism</div>
<svg style="left:1349px;top:77px" width="16" height="16"><circle cx="8" cy="8" r="7.5" fill="#3bb273"/><path d="M3 12L8 4L13 12L8 10Z" fill="#333"/></svg>
<div class="t" style="left:1373px;top:73.5px;font-size:11.8px;color:#3c4043">ADS-B Exchange - t...</div>
<svg style="left:1501px;top:77px" width="16" height="16"><rect x="1" y="1" width="14" height="14" fill="#7b4397"/><rect x="8" y="1" width="7" height="14" fill="#dc2430" opacity=".7"/></svg>
<div class="t" style="left:1525px;top:73.5px;font-size:11.8px;color:#3c4043">uiGradients - Beauti...</div>
<svg style="left:1655px;top:77px" width="16" height="16"><path d="M8 2L14 8L8 14L2 8Z" fill="none" stroke="#f39c2c" stroke-width="2"/></svg>
<div class="t" style="left:1679px;top:73.5px;font-size:11.8px;color:#3c4043">HR &amp; Salaris Gemak</div>
<svg style="left:1892px;top:82px" width="10" height="9"><path d="M0.5 0.5L4.5 4.5L0.5 8.5M5 0.5L9 4.5L5 8.5" fill="none" stroke="#5f6368" stroke-width="1.3"/></svg>
<div style="position:absolute;left:0px;top:102px;width:1920px;height:978px;background:#f4f5fa"></div>
<div style="position:absolute;left:0px;top:102px;width:249px;height:978px;background:#fff;box-shadow:1px 0 8px rgba(0,0,0,.04)"></div>
<svg style="left:50px;top:118px" width="150" height="65" viewBox="0 0 1911 828"><g fill="#154b8b"><path fill-rule="evenodd" d="M125 375H240C300 375 300 525 240 525H185V595H125ZM185 420V485H230C250 485 250 420 230 420Z"/><circle cx="512" cy="620" r="90" fill="none" stroke="#154b8b" stroke-width="55"/><path d="M755 375H815V545H900V595H755Z"/><rect x="995" y="375" width="60" height="220"/><path d="M1160 375H1325V420H1272V595H1215V420H1160Z"/><rect x="1433" y="375" width="58" height="220"/><path d="M1630 375H1775V420H1690V465H1770V507H1690V550H1775V595H1630Z"/></g><path d="M322 385L400 335L450 345C430 320 420 300 425 260C430 210 480 170 490 120C545 150 550 210 500 260C475 290 480 320 495 340L520 330C505 290 525 250 560 215C595 250 590 290 548 325L600 318L700 385V440L510 600L322 430Z" fill="#b8925a"/><path d="M470 345C455 300 470 260 500 230" fill="none" stroke="#fff" stroke-width="10"/><circle cx="505" cy="470" r="28" fill="#fff"/><path d="M515 565L700 432" stroke="#fff" stroke-width="12"/></svg>
<div class="t" style="left:24px;top:195.6px;font-size:11.5px;font-weight:bold;letter-spacing:.6px;color:#8a9ab0">POLITIE</div>
<div style="position:absolute;left:8px;top:273px;width:232px;height:45px;background:#f4f6fa;border-radius:6px"></div>
<div class="t" style="left:56px;top:238px;font-size:14.7px;color:#6e7687">Dashboard</div>
<svg style="left:24px;top:240px" width="18" height="16"><path d="M7 1A7 7 0 1 0 14 9H7Z" fill="#154b8b"/><path d="M9 0V7H16A7 7 0 0 0 9 0Z" fill="#154b8b"/></svg>
<div class="t" style="left:56px;top:285px;font-size:14.7px;color:#253049">Basisadministratie</div>
<svg style="left:24px;top:287px" width="18" height="16"><circle cx="7" cy="4" r="3.5" fill="#154b8b"/><path d="M1 15C1 9 13 9 13 15Z" fill="#154b8b"/></svg>
<div class="t" style="left:56px;top:333px;font-size:14.7px;color:#6e7687">Voertuigregistratie</div>
<svg style="left:24px;top:335px" width="18" height="16"><path d="M3 6L5 2H13L15 6H17V12H15A2 2 0 0 1 11 12H7A2 2 0 0 1 3 12H1V6Z" fill="#154b8b"/><path d="M5.5 6L6.5 3.5H11.5L12.5 6Z" fill="#fff"/><circle cx="5" cy="12" r="1.6" fill="#fff"/><circle cx="13" cy="12" r="1.6" fill="#fff"/></svg>
<div style="position:absolute;left:24px;top:382px;width:201px;height:1px;background:#e3e6ec"></div>
<div class="t" style="left:24px;top:397px;font-size:11.5px;font-weight:bold;letter-spacing:.6px;color:#8a9ab0">ADMINISTRATIE</div>
<div class="t" style="left:56px;top:439.5px;font-size:14.7px;color:#6e7687">Gebruikers</div>
<svg style="left:24px;top:441.5px" width="18" height="16"><circle cx="9" cy="4" r="3" fill="#154b8b"/><path d="M4 14C4 9 14 9 14 14Z" fill="#154b8b"/><circle cx="3" cy="6" r="2" fill="#154b8b"/><circle cx="15" cy="6" r="2" fill="#154b8b"/><path d="M0 12C0 9 4 9 4 10V12ZM18 12C18 9 14 9 14 10V12Z" fill="#154b8b"/></svg>
<div class="t" style="left:56px;top:487px;font-size:14.7px;color:#6e7687">Personages</div>
<svg style="left:24px;top:489px" width="18" height="16"><circle cx="6" cy="4" r="3.3" fill="#154b8b"/><path d="M0 15C0 9 11 9 11 12V15Z" fill="#154b8b"/><circle cx="13" cy="11" r="3.2" fill="none" stroke="#154b8b" stroke-width="2.2" stroke-dasharray="1.6 1"/></svg>
<div class="t" style="left:56px;top:534.7px;font-size:14.7px;color:#6e7687">Voertuigen</div>
<svg style="left:24px;top:536.7px" width="18" height="16"><path d="M3 6L5 2H13L15 6H17V12H15A2 2 0 0 1 11 12H7A2 2 0 0 1 3 12H1V6Z" fill="#154b8b"/><path d="M5.5 6L6.5 3.5H11.5L12.5 6Z" fill="#fff"/><circle cx="5" cy="12" r="1.6" fill="#fff"/><circle cx="13" cy="12" r="1.6" fill="#fff"/></svg>
<div style="position:absolute;left:24px;top:600px;width:201px;height:1px;background:#e3e6ec"></div>
<div class="t" style="left:24px;top:615px;font-size:11.5px;font-weight:bold;letter-spacing:.6px;color:#8a9ab0">ACCOUNT</div>
<div class="t" style="left:56px;top:658px;font-size:14.7px;color:#6e7687">Profiel</div>
<svg style="left:24px;top:660px" width="18" height="16"><rect x="0" y="1" width="17" height="13" rx="1" fill="#154b8b"/><rect x="2" y="5" width="5" height="5" fill="#fff"/><path d="M9 6H15M9 9H15" stroke="#fff" stroke-width="1.3"/></svg>
<div style="position:absolute;left:280.5px;top:102px;width:1597.5px;height:33px;background:#fff;border-radius:0 0 6px 6px"></div>
<div style="position:absolute;left:280.5px;top:165px;width:1597.5px;height:255px;background:#fff;border-radius:6px;box-shadow:0 1px 3px rgba(30,40,90,.03)"></div>
<div class="t" style="left:304px;top:187.5px;font-size:18.5px;-webkit-text-stroke:.5px #283253;color:#283253">Recente mutaties</div>
<div style="position:absolute;left:304px;top:231.4px;width:56.5px;height:30px;border:1px solid #8d8d8d;border-radius:3px;background:#fff"></div>
<div class="t" style="left:313px;top:236.4px;font-size:14px;color:#222">10</div>
<svg style="left:347px;top:243.4px" width="10" height="7"><path d="M1 1L5 5L9 1" fill="none" stroke="#111" stroke-width="1.8"/></svg>
<div class="t" style="left:365px;top:236.4px;font-size:14.7px;color:#4a4a4a">resultaten weergeven</div>
<div class="t" style="left:1622.7px;top:237.5px;font-size:14px;color:#3a3a3a">Zoeken:</div>
<div style="position:absolute;left:1677.5px;top:231.5px;width:176px;height:32px;border:1px solid #9a9a9a;border-radius:3px;background:#fff"></div>
<div style="position:absolute;left:280.5px;top:272px;width:1597.5px;height:36.5px;background:#f5f7fb;border-top:1px solid #e6e9ef;border-bottom:1px solid #e6e9ef"></div>
<div class="t" style="left:304px;top:281.8px;font-size:10px;font-weight:bold;letter-spacing:1.1px;color:#8a98ac">REGISTRATIENUMMER</div>
<svg style="left:508px;top:284.2px" width="10" height="8"><path d="M5 0L10 7H0Z" fill="#7376d6"/></svg>
<div class="t" style="left:547px;top:281.8px;font-size:10px;font-weight:bold;letter-spacing:1.1px;color:#8a98ac">VERBALISANT</div>
<svg style="left:684px;top:282.2px" width="10" height="16"><path d="M5 0L9 6H1Z" fill="#d3d3d3"/><path d="M5 16L9 10H1Z" fill="#d3d3d3"/></svg>
<div class="t" style="left:723px;top:281.8px;font-size:10px;font-weight:bold;letter-spacing:1.1px;color:#8a98ac">DATUM</div>
<svg style="left:893px;top:282.2px" width="10" height="16"><path d="M5 0L9 6H1Z" fill="#d3d3d3"/><path d="M5 16L9 10H1Z" fill="#d3d3d3"/></svg>
<div class="t" style="left:931.7px;top:281.8px;font-size:10px;font-weight:bold;letter-spacing:1.1px;color:#8a98ac">WAT</div>
<svg style="left:1049px;top:282.2px" width="10" height="16"><path d="M5 0L9 6H1Z" fill="#d3d3d3"/><path d="M5 16L9 10H1Z" fill="#d3d3d3"/></svg>
<div class="t" style="left:1088.6px;top:281.8px;font-size:10px;font-weight:bold;letter-spacing:1.1px;color:#8a98ac">REDEN</div>
<svg style="left:1702px;top:282.2px" width="10" height="16"><path d="M5 0L9 6H1Z" fill="#d3d3d3"/><path d="M5 16L9 10H1Z" fill="#d3d3d3"/></svg>
<div class="t" style="left:1741px;top:281.8px;font-size:10px;font-weight:bold;letter-spacing:1.1px;color:#8a98ac">BEKIJKEN</div>
<svg style="left:1863px;top:282.2px" width="10" height="16"><path d="M5 0L9 6H1Z" fill="#d3d3d3"/><path d="M5 16L9 10H1Z" fill="#d3d3d3"/></svg>
<div style="position:absolute;left:280.5px;top:352px;width:1597.5px;height:1.4px;background:#111"></div>
<div class="t" style="left:304px;top:385.8px;font-size:14.7px;color:#4a4a4a">1 tot 1 van 1 resultaten</div>
<div class="t" style="left:1622.7px;top:389.8px;font-size:15.3px;color:#7d7d7d">Vorige</div>
<div class="t" style="left:1717px;top:389.8px;font-size:15.3px;color:#333">1</div>
<div class="t" style="left:1768px;top:389.8px;font-size:15.3px;color:#7d7d7d">Volgende</div>
<div class="t" style="left:304px;top:320.5px;font-size:13.6px;color:#344050;-webkit-text-stroke:.2px #344050">#1</div>
<div class="t" style="left:547px;top:320.5px;font-size:13.6px;color:#525f7f">Max S</div>
<div class="t" style="left:723px;top:320.5px;font-size:13.6px;color:#525f7f">31/07/2022 20:22</div>
<div class="t" style="left:931.7px;top:320.5px;font-size:13.6px;color:#525f7f">Signalering</div>
<div class="t" style="left:1088.6px;top:320.5px;font-size:13.6px;color:#525f7f">awdawdawdawdawdawdawdawdawdawdawdawdawdawdawdawdaw...</div>
<div style="position:absolute;left:1741px;top:317.4px;width:70px;height:27.5px;background:#0b3d7e;border-radius:4px;box-shadow:0 2px 4px rgba(0,0,0,.15)"></div>
<div class="t" style="left:1749px;top:321px;font-size:12.7px;font-weight:bold;color:#fff">Bekijken</div>
<div style="position:absolute;left:280.5px;top:451px;width:1597.5px;height:248px;background:#fff;border-radius:6px;box-shadow:0 1px 3px rgba(30,40,90,.03)"></div>
<div class="t" style="left:304px;top:474.5px;font-size:18.5px;-webkit-text-stroke:.5px #283253;color:#283253">Persoonsgebonden notities</div>
<div style="position:absolute;left:304px;top:519px;width:56.5px;height:30px;border:1px solid #8d8d8d;border-radius:3px;background:#fff"></div>
<div class="t" style="left:313px;top:524px;font-size:14px;color:#222">10</div>
<svg style="left:347px;top:531px" width="10" height="7"><path d="M1 1L5 5L9 1" fill="none" stroke="#111" stroke-width="1.8"/></svg>
<div class="t" style="left:365px;top:524px;font-size:14.7px;color:#4a4a4a">resultaten weergeven</div>
<div class="t" style="left:1622.7px;top:525px;font-size:14px;color:#3a3a3a">Zoeken:</div>
<div style="position:absolute;left:1677.5px;top:519px;width:176px;height:32px;border:1px solid #9a9a9a;border-radius:3px;background:#fff"></div>
<div style="position:absolute;left:280.5px;top:560.5px;width:1597.5px;height:36.10000000000002px;background:#f5f7fb;border-top:1px solid #e6e9ef;border-bottom:1px solid #e6e9ef"></div>
<div class="t" style="left:304px;top:570.0px;font-size:10px;font-weight:bold;letter-spacing:1.1px;color:#8a98ac">REGISTRATIENUMMER</div>
<svg style="left:997px;top:572.5px" width="10" height="8"><path d="M5 0L10 7H0Z" fill="#7376d6"/></svg>
<div class="t" style="left:1036.5px;top:570.0px;font-size:10px;font-weight:bold;letter-spacing:1.1px;color:#8a98ac">NOTITIE</div>
<svg style="left:1205px;top:570.5px" width="10" height="16"><path d="M5 0L9 6H1Z" fill="#d3d3d3"/><path d="M5 16L9 10H1Z" fill="#d3d3d3"/></svg>
<div class="t" style="left:1244.7px;top:570.0px;font-size:10px;font-weight:bold;letter-spacing:1.1px;color:#8a98ac">DOOR</div>
<svg style="left:1385.5px;top:570.5px" width="10" height="16"><path d="M5 0L9 6H1Z" fill="#d3d3d3"/><path d="M5 16L9 10H1Z" fill="#d3d3d3"/></svg>
<div class="t" style="left:1424px;top:570.0px;font-size:10px;font-weight:bold;letter-spacing:1.1px;color:#8a98ac">DATUM</div>
<svg style="left:1582px;top:570.5px" width="10" height="16"><path d="M5 0L9 6H1Z" fill="#d3d3d3"/><path d="M5 16L9 10H1Z" fill="#d3d3d3"/></svg>
<div class="t" style="left:1621.5px;top:570.0px;font-size:10px;font-weight:bold;letter-spacing:1.1px;color:#8a98ac">VERWIJDEREN</div>
<svg style="left:1863.6px;top:570.5px" width="10" height="16"><path d="M5 0L9 6H1Z" fill="#d3d3d3"/><path d="M5 16L9 10H1Z" fill="#d3d3d3"/></svg>
<div style="position:absolute;left:280.5px;top:633px;width:1597.5px;height:1.4px;background:#111"></div>
<div class="t" style="left:304px;top:665px;font-size:14.7px;color:#4a4a4a">1 tot 1 van 1 resultaten</div>
<div class="t" style="left:1622.7px;top:669px;font-size:15.3px;color:#7d7d7d">Vorige</div>
<div class="t" style="left:1717px;top:669px;font-size:15.3px;color:#333">1</div>
<div class="t" style="left:1768px;top:669px;font-size:15.3px;color:#7d7d7d">Volgende</div>
<div class="t" style="left:304px;top:604.5px;font-size:14.1px;-webkit-text-stroke:.35px #5a6a8a;color:#5a6a8a">Deze persoon heeft geen persoonlijke notities.</div>
<div style="position:absolute;left:1747px;top:471px;width:107px;height:27.5px;background:#0b3d7e;border-radius:4px;box-shadow:0 2px 4px rgba(0,0,0,.15)"></div>
<div class="t" style="left:1755px;top:475px;font-size:13.2px;font-weight:bold;color:#fff">Nieuwe notitie</div>
<div style="position:absolute;left:280.5px;top:730px;width:1597.5px;height:246.5px;background:#fff;border-radius:6px;box-shadow:0 1px 3px rgba(30,40,90,.03)"></div>
<div class="t" style="left:304px;top:753px;font-size:18.5px;-webkit-text-stroke:.5px #283253;color:#283253">Voertuigen</div>
<div style="position:absolute;left:304px;top:796px;width:56.5px;height:30px;border:1px solid #8d8d8d;border-radius:3px;background:#fff"></div>
<div class="t" style="left:313px;top:801px;font-size:14px;color:#222">10</div>
<svg style="left:347px;top:808px" width="10" height="7"><path d="M1 1L5 5L9 1" fill="none" stroke="#111" stroke-width="1.8"/></svg>
<div class="t" style="left:365px;top:801px;font-size:14.7px;color:#4a4a4a">resultaten weergeven</div>
<div class="t" style="left:1622.7px;top:802px;font-size:14px;color:#3a3a3a">Zoeken:</div>
<div style="position:absolute;left:1677.5px;top:796px;width:176px;height:32px;border:1px solid #9a9a9a;border-radius:3px;background:#fff"></div>
<div style="position:absolute;left:280.5px;top:837px;width:1597.5px;height:36px;background:#f5f7fb;border-top:1px solid #e6e9ef;border-bottom:1px solid #e6e9ef"></div>
<div class="t" style="left:304px;top:846.5px;font-size:10px;font-weight:bold;letter-spacing:1.1px;color:#8a98ac">KENTEKEN</div>
<svg style="left:1231px;top:849.0px" width="10" height="8"><path d="M5 0L10 7H0Z" fill="#7376d6"/></svg>
<div class="t" style="left:1270px;top:846.5px;font-size:10px;font-weight:bold;letter-spacing:1.1px;color:#8a98ac">TYPE</div>
<svg style="left:1497px;top:847.0px" width="10" height="16"><path d="M5 0L9 6H1Z" fill="#d3d3d3"/><path d="M5 16L9 10H1Z" fill="#d3d3d3"/></svg>
<div class="t" style="left:1536px;top:846.5px;font-size:10px;font-weight:bold;letter-spacing:1.1px;color:#8a98ac">MUTEREN</div>
<svg style="left:1863px;top:847.0px" width="10" height="16"><path d="M5 0L9 6H1Z" fill="#d3d3d3"/><path d="M5 16L9 10H1Z" fill="#d3d3d3"/></svg>
<div style="position:absolute;left:280.5px;top:910px;width:1597.5px;height:1.4px;background:#111"></div>
<div class="t" style="left:304px;top:942px;font-size:14.7px;color:#4a4a4a">1 tot 1 van 1 resultaten</div>
<div class="t" style="left:1622.7px;top:946px;font-size:15.3px;color:#7d7d7d">Vorige</div>
<div class="t" style="left:1717px;top:946px;font-size:15.3px;color:#333">1</div>
<div class="t" style="left:1768px;top:946px;font-size:15.3px;color:#7d7d7d">Volgende</div>
<div class="t" style="left:304px;top:881px;font-size:14.1px;-webkit-text-stroke:.35px #5a6a8a;color:#5a6a8a">Deze persoon heeft geen voertuigen.</div>
<div style="position:absolute;left:280.5px;top:1007px;width:1597.5px;height:146px;background:#fff;border-radius:6px;box-shadow:0 1px 3px rgba(30,40,90,.03)"></div>
<div class="t" style="left:304px;top:1033px;font-size:18.5px;-webkit-text-stroke:.5px #283253;color:#283253">Openstaande bekeuringen (60)</div>
<div style="position:absolute;left:1720px;top:1027px;width:133px;height:28px;background:#0b3d7e;border-radius:4px"></div>
<div class="t" style="left:1730px;top:1031px;font-size:13.2px;font-weight:bold;color:#fff">Alles kwijtschelden</div>
<div style="position:absolute;left:1878px;top:102px;width:30px;height:978px;background:linear-gradient(90deg,#f4f5fa,#f9fafd)"></div>
<div style="position:absolute;left:1907px;top:102px;width:13px;height:978px;background:linear-gradient(90deg,#dcdcdc,#efefef 40%,#e9e9e9);border-radius:6px 6px 0 0"></div>
<div style="position:absolute;left:1908px;top:453px;width:12px;height:444px;background:#0a3f7b;border-radius:6px"></div>
<svg style="left:1608px;top:365px" width="14" height="22"><path d="M1 1V17L5 13L8 20L10.5 19L7.5 12H13Z" fill="#fff" stroke="#000" stroke-width="1"/></svg>
</div>
<div style="position:absolute;left:0px;top:1400px;width:2560px;height:40px;background:#1b1d21;overflow:hidden">
<svg style="left:14px;top:12px" width="19" height="19"><path d="M0 2.6L7.8 1.5V9H0ZM8.7 1.4L19 0V9H8.7ZM0 9.9H7.8V17.5L0 16.4ZM8.7 9.9H19V19L8.7 17.6Z" fill="#fff"/></svg>
<svg style="left:62px;top:11px" width="19" height="19"><circle cx="11.5" cy="7.5" r="6" fill="none" stroke="#fff" stroke-width="1.5"/><path d="M7.2 11.8L1 18" stroke="#fff" stroke-width="1.8"/></svg>
<svg width="0" height="0" style="position:absolute"><defs><linearGradient id="stm" x1="0" y1="0" x2="0" y2="1"><stop offset="0" stop-color="#111d2e"/><stop offset="1" stop-color="#1476b8"/></linearGradient></defs></svg>
<div style="position:absolute;left:147.6px;top:0;width:48px;height:40px;background:#3a3b3f"></div>
<svg style="left:110.5px;top:8px" width="24" height="24"><path d="M0 4H8L10 6H24V20H0Z" fill="#e8b00e"/><rect x="0" y="8" width="24" height="12" fill="#ffd35c"/><rect x="7" y="13" width="10" height="7" fill="#2a7fd4"/></svg>
<svg style="left:159.6px;top:8px" width="24" height="24"><circle cx="12" cy="12" r="11" fill="#db4437"/><path d="M12 12L1.5 8A11 11 0 0 1 22.5 8Z" fill="#db4437"/><path d="M12 12L22.5 8A11 11 0 0 1 12 23Z" fill="#fbbc05"/><path d="M12 12L12 23A11 11 0 0 1 1.5 8Z" fill="#0f9d58"/><circle cx="12" cy="12" r="5" fill="#fff"/><circle cx="12" cy="12" r="4" fill="#4285f4"/></svg>
<div style="position:absolute;left:147.6px;top:38px;width:48px;height:2px;background:#e59be4"></div>
<svg style="left:208.7px;top:8px" width="24" height="24"><circle cx="12" cy="12" r="11" fill="#2a3f85"/><path d="M6 12A6 6 0 0 1 14 6" fill="none" stroke="#fff" stroke-width="2"/><circle cx="17" cy="17" r="6" fill="#e8193c"/><circle cx="17" cy="17" r="1.5" fill="#fff"/></svg>
<div style="position:absolute;left:200.7px;top:38px;width:40px;height:2px;background:#e59be4"></div>
<svg style="left:257.8px;top:8px" width="24" height="24"><rect x="1" y="1" width="22" height="22" rx="5" fill="#f3f3f3"/><path d="M6 15L12 10L18 15" fill="none" stroke="#8930fd" stroke-width="2.4"/><path d="M7 9L12 5L17 9" fill="none" stroke="#ff02f0" stroke-width="2.4"/></svg>
<div style="position:absolute;left:249.8px;top:38px;width:40px;height:2px;background:#e59be4"></div>
<svg style="left:306.9px;top:8px" width="24" height="24"><circle cx="12" cy="12" r="11" fill="#f44336"/><path d="M12 12L12 1A11 11 0 0 1 23 12Z" fill="#4caf50"/><path d="M12 12L23 12A11 11 0 0 1 12 23Z" fill="#ffc107"/><path d="M12 12L12 23A11 11 0 0 1 1 12Z" fill="#2196f3"/><circle cx="12" cy="12" r="5.5" fill="#1d1e22"/></svg>
<svg style="left:356.0px;top:8px" width="24" height="24"><circle cx="18" cy="6" r="3.5" fill="#7b83eb"/><rect x="8" y="7" width="14" height="13" rx="3" fill="#5059c9"/><rect x="1" y="5" width="13" height="13" rx="1.5" fill="#4b53bc"/><text x="4" y="15.5" font-size="10" font-weight="bold" fill="#fff" font-family="Liberation Sans">T</text></svg>
<svg style="left:405.1px;top:8px" width="24" height="24"><rect x="6" y="2" width="17" height="20" rx="1.5" fill="#2b7cd3"/><rect x="6" y="8" width="17" height="6" fill="#185abd"/><rect x="0" y="6" width="13" height="12" rx="1.5" fill="#185abd"/><text x="1.5" y="15.5" font-size="9" font-weight="bold" fill="#fff" font-family="Liberation Sans">W</text></svg>
<svg style="left:454.2px;top:8px" width="24" height="24"><rect x="6" y="2" width="17" height="20" rx="1.5" fill="#21a366"/><rect x="6" y="8" width="17" height="6" fill="#107c41"/><rect x="0" y="6" width="13" height="12" rx="1.5" fill="#107c41"/><text x="2.5" y="15.5" font-size="9" font-weight="bold" fill="#fff" font-family="Liberation Sans">X</text></svg>
<svg style="left:503.29999999999995px;top:8px" width="24" height="24"><circle cx="13" cy="12" r="10" fill="#ff8f6b"/><path d="M13 12V2A10 10 0 0 1 23 12Z" fill="#ed6c47"/><rect x="0" y="6" width="13" height="12" rx="1.5" fill="#c43e1c"/><text x="3" y="15.5" font-size="9" font-weight="bold" fill="#fff" font-family="Liberation Sans">P</text></svg>
<svg style="left:552.4000000000001px;top:8px" width="24" height="24"><rect x="8" y="3" width="15" height="18" rx="1.5" fill="#28a8ea"/><rect x="8" y="11" width="15" height="10" fill="#0078d4"/><rect x="0" y="6" width="13" height="12" rx="1.5" fill="#0364b8"/><text x="2" y="15.5" font-size="9" font-weight="bold" fill="#fff" font-family="Liberation Sans">O</text></svg>
<svg style="left:601.5px;top:8px" width="24" height="24"><rect x="0" y="0" width="24" height="24" fill="#bf0000"/><text x="2" y="19" font-size="16" font-weight="bold" font-style="italic" fill="#fff" font-family="Liberation Sans">Fz</text></svg>
<svg style="left:650.6px;top:8px" width="24" height="24"><rect x="0" y="0" width="24" height="24" rx="2" fill="#fb7a24"/><path d="M5 6C9 6 9 10 12 10C15 10 15 6 19 6C19 10 15 10 15 12C15 14 19 14 19 18C15 18 15 14 12 14C9 14 9 18 5 18C5 14 9 14 9 12C9 10 5 10 5 6Z" fill="none" stroke="#fff" stroke-width="2"/></svg>
<div style="position:absolute;left:642.6px;top:38px;width:40px;height:2px;background:#e59be4"></div>
<svg style="left:699.7px;top:8px" width="24" height="24"><circle cx="12" cy="12" r="11.5" fill="#6e40c9"/><path d="M8 18V15C6 15 5 13 5 11C5 7 8 5 12 5C16 5 19 7 19 11C19 13 18 15 16 15V18" fill="none" stroke="#fff" stroke-width="2"/></svg>
<div style="position:absolute;left:691.7px;top:38px;width:40px;height:2px;background:#e59be4"></div>
<svg style="left:748.8000000000001px;top:8px" width="24" height="24"><circle cx="12" cy="12" r="11.5" fill="#5865f2"/><path d="M6 8C8 6 16 6 18 8C19 11 19 14 18 16C15 17 9 17 6 16C5 14 5 11 6 8Z" fill="#fff"/><circle cx="9.5" cy="12" r="1.5" fill="#5865f2"/><circle cx="14.5" cy="12" r="1.5" fill="#5865f2"/><circle cx="19" cy="19" r="5.5" fill="#ed4245"/><text x="16.3" y="22.5" font-size="8.5" font-weight="bold" fill="#fff" font-family="Liberation Sans">3</text></svg>
<div style="position:absolute;left:740.8000000000001px;top:38px;width:40px;height:2px;background:#e59be4"></div>
<svg style="left:797.9px;top:8px" width="24" height="24"><circle cx="12" cy="12" r="11.5" fill="#0b4f86"/><circle cx="12" cy="12" r="11.5" fill="url(#stm)"/><circle cx="15" cy="9" r="3.5" fill="none" stroke="#fff" stroke-width="1.6"/><path d="M2 13L10 16" stroke="#fff" stroke-width="2.5"/></svg>
<div style="position:absolute;left:789.9px;top:38px;width:40px;height:2px;background:#e59be4"></div>
<svg style="left:847.0px;top:8px" width="24" height="24"><path d="M12 1L23 12L12 23L1 12Z" fill="#60b4f6"/><path d="M12 12L23 12L12 23Z" fill="#f4de60"/><path d="M1 12L12 1L12 12Z" fill="#f26a6a"/><path d="M12 12L12 1L23 12Z" fill="#7ed57a"/><path d="M9 3V21M13 6L9 10" stroke="#222" stroke-width="1.5"/></svg>
<svg style="left:896.1px;top:8px" width="24" height="24"><path d="M1 3L17 0L24 8L20 24L2 22Z" fill="#b345f1"/><path d="M1 3L17 0L24 8L8 14Z" fill="#ff318c"/><rect x="4" y="4" width="16" height="16" fill="#000"/><text x="5.5" y="12" font-size="7" font-weight="bold" fill="#fff" font-family="Liberation Sans">PS</text><rect x="6" y="16" width="6" height="1.3" fill="#fff"/></svg>
<div style="position:absolute;left:884.1px;top:38px;width:48px;height:2px;background:#e59be4"></div>
<svg style="left:945.2px;top:8px" width="24" height="24"><circle cx="12" cy="12" r="11.5" fill="#5bb03f"/><circle cx="12" cy="13" r="10" fill="#eaeaea"/><text x="3.5" y="17" font-size="10.5" font-weight="bold" fill="#222" font-family="Liberation Sans">HS</text></svg>
<svg style="left:994.3000000000001px;top:8px" width="24" height="24"><path d="M17 1L23 4V20L17 23L6 13L2 16L0 15V9L2 8L6 11ZM17 7L11 12L17 17Z" fill="#0a7bd4"/><path d="M17 1L23 4V20L17 23Z" fill="#2ea7f2"/></svg>
<svg style="left:1043.4px;top:8px" width="24" height="24"><circle cx="12" cy="12" r="11.5" fill="#1ed760"/><path d="M5.5 8.5C10 7 15 7.5 18.5 9.5M6.5 12C10 11 14 11.5 17 13M7.5 15.3C10 14.6 13 15 15.5 16.3" fill="none" stroke="#000" stroke-width="1.8" stroke-linecap="round"/></svg>
<div style="position:absolute;left:1035.4px;top:38px;width:40px;height:2px;background:#e59be4"></div>
<svg style="left:1092.5px;top:8px" width="24" height="24"><path d="M1 2H23L12 23Z" fill="#3a75c4" stroke="#c83232" stroke-width="1.5"/><text x="7" y="14" font-size="11" font-weight="bold" fill="#f5d442" font-family="Liberation Serif">S</text></svg>
<svg style="left:1141.6000000000001px;top:8px" width="24" height="24"><rect x="1" y="1" width="22" height="22" fill="#001e36" stroke="#31a8ff" stroke-width="1.5"/><text x="4" y="17" font-size="11" font-weight="bold" fill="#31a8ff" font-family="Liberation Sans">Ps</text></svg>
<svg style="left:1190.7px;top:8px" width="24" height="24"><rect x="2" y="3" width="20" height="14" fill="#cfd4d8"/><rect x="4" y="5" width="16" height="10" fill="#e8f4fb"/><path d="M5 12L8 9L10 13L13 6L15 11L19 10" fill="none" stroke="#3a8ed0" stroke-width="1.1"/><rect x="9" y="18" width="6" height="3" fill="#aab"/></svg>
<svg style="left:1239.8px;top:8px" width="24" height="24"><rect x="0" y="1" width="24" height="22" fill="#560da3"/><text x="1.2" y="15.5" font-size="7.5" font-weight="bold" fill="#fff" font-family="Liberation Sans">NZXT</text></svg>
<div style="position:absolute;left:1231.8px;top:38px;width:40px;height:2px;background:#e59be4"></div>
<svg style="left:1288.9px;top:8px" width="24" height="24"><circle cx="12" cy="12" r="11.5" fill="#2a3b66"/><circle cx="12" cy="12" r="8.5" fill="#7fb3e6"/><circle cx="12" cy="12" r="6.5" fill="#2a3b66"/><circle cx="12" cy="12" r="5.5" fill="#c7d9ef"/></svg>
<div style="position:absolute;left:1280.9px;top:38px;width:40px;height:2px;background:#e59be4"></div>
</div>
<div style="position:absolute;left:2560px;top:1287px;width:1920px;height:40px;background:#1b1d21;overflow:hidden">
<svg style="left:14px;top:12px" width="19" height="19"><path d="M0 2.6L7.8 1.5V9H0ZM8.7 1.4L19 0V9H8.7ZM0 9.9H7.8V17.5L0 16.4ZM8.7 9.9H19V19L8.7 17.6Z" fill="#fff"/></svg>
<svg style="left:62px;top:11px" width="19" height="19"><circle cx="11.5" cy="7.5" r="6" fill="none" stroke="#fff" stroke-width="1.5"/><path d="M7.2 11.8L1 18" stroke="#fff" stroke-width="1.8"/></svg>
<svg width="0" height="0" style="position:absolute"><defs><linearGradient id="stm" x1="0" y1="0" x2="0" y2="1"><stop offset="0" stop-color="#111d2e"/><stop offset="1" stop-color="#1476b8"/></linearGradient></defs></svg>
<div style="position:absolute;left:147.6px;top:0;width:48px;height:40px;background:#3a3b3f"></div>
<svg style="left:110.5px;top:8px" width="24" height="24"><path d="M0 4H8L10 6H24V20H0Z" fill="#e8b00e"/><rect x="0" y="8" width="24" height="12" fill="#ffd35c"/><rect x="7" y="13" width="10" height="7" fill="#2a7fd4"/></svg>
<svg style="left:159.6px;top:8px" width="24" height="24"><circle cx="12" cy="12" r="11" fill="#db4437"/><path d="M12 12L1.5 8A11 11 0 0 1 22.5 8Z" fill="#db4437"/><path d="M12 12L22.5 8A11 11 0 0 1 12 23Z" fill="#fbbc05"/><path d="M12 12L12 23A11 11 0 0 1 1.5 8Z" fill="#0f9d58"/><circle cx="12" cy="12" r="5" fill="#fff"/><circle cx="12" cy="12" r="4" fill="#4285f4"/></svg>
<div style="position:absolute;left:147.6px;top:38px;width:48px;height:2px;background:#e59be4"></div>
<svg style="left:208.7px;top:8px" width="24" height="24"><circle cx="12" cy="12" r="11" fill="#2a3f85"/><path d="M6 12A6 6 0 0 1 14 6" fill="none" stroke="#fff" stroke-width="2"/><circle cx="17" cy="17" r="6" fill="#e8193c"/><circle cx="17" cy="17" r="1.5" fill="#fff"/></svg>
<div style="position:absolute;left:200.7px;top:38px;width:40px;height:2px;background:#e59be4"></div>
<svg style="left:257.8px;top:8px" width="24" height="24"><rect x="1" y="1" width="22" height="22" rx="5" fill="#f3f3f3"/><path d="M6 15L12 10L18 15" fill="none" stroke="#8930fd" stroke-width="2.4"/><path d="M7 9L12 5L17 9" fill="none" stroke="#ff02f0" stroke-width="2.4"/></svg>
<div style="position:absolute;left:249.8px;top:38px;width:40px;height:2px;background:#e59be4"></div>
<svg style="left:306.9px;top:8px" width="24" height="24"><circle cx="12" cy="12" r="11" fill="#f44336"/><path d="M12 12L12 1A11 11 0 0 1 23 12Z" fill="#4caf50"/><path d="M12 12L23 12A11 11 0 0 1 12 23Z" fill="#ffc107"/><path d="M12 12L12 23A11 11 0 0 1 1 12Z" fill="#2196f3"/><circle cx="12" cy="12" r="5.5" fill="#1d1e22"/></svg>
<svg style="left:356.0px;top:8px" width="24" height="24"><circle cx="18" cy="6" r="3.5" fill="#7b83eb"/><rect x="8" y="7" width="14" height="13" rx="3" fill="#5059c9"/><rect x="1" y="5" width="13" height="13" rx="1.5" fill="#4b53bc"/><text x="4" y="15.5" font-size="10" font-weight="bold" fill="#fff" font-family="Liberation Sans">T</text></svg>
<svg style="left:405.1px;top:8px" width="24" height="24"><rect x="6" y="2" width="17" height="20" rx="1.5" fill="#2b7cd3"/><rect x="6" y="8" width="17" height="6" fill="#185abd"/><rect x="0" y="6" width="13" height="12" rx="1.5" fill="#185abd"/><text x="1.5" y="15.5" font-size="9" font-weight="bold" fill="#fff" font-family="Liberation Sans">W</text></svg>
<svg style="left:454.2px;top:8px" width="24" height="24"><rect x="6" y="2" width="17" height="20" rx="1.5" fill="#21a366"/><rect x="6" y="8" width="17" height="6" fill="#107c41"/><rect x="0" y="6" width="13" height="12" rx="1.5" fill="#107c41"/><text x="2.5" y="15.5" font-size="9" font-weight="bold" fill="#fff" font-family="Liberation Sans">X</text></svg>
<svg style="left:503.29999999999995px;top:8px" width="24" height="24"><circle cx="13" cy="12" r="10" fill="#ff8f6b"/><path d="M13 12V2A10 10 0 0 1 23 12Z" fill="#ed6c47"/><rect x="0" y="6" width="13" height="12" rx="1.5" fill="#c43e1c"/><text x="3" y="15.5" font-size="9" font-weight="bold" fill="#fff" font-family="Liberation Sans">P</text></svg>
<svg style="left:552.4000000000001px;top:8px" width="24" height="24"><rect x="8" y="3" width="15" height="18" rx="1.5" fill="#28a8ea"/><rect x="8" y="11" width="15" height="10" fill="#0078d4"/><rect x="0" y="6" width="13" height="12" rx="1.5" fill="#0364b8"/><text x="2" y="15.5" font-size="9" font-weight="bold" fill="#fff" font-family="Liberation Sans">O</text></svg>
<svg style="left:601.5px;top:8px" width="24" height="24"><rect x="0" y="0" width="24" height="24" fill="#bf0000"/><text x="2" y="19" font-size="16" font-weight="bold" font-style="italic" fill="#fff" font-family="Liberation Sans">Fz</text></svg>
<svg style="left:650.6px;top:8px" width="24" height="24"><rect x="0" y="0" width="24" height="24" rx="2" fill="#fb7a24"/><path d="M5 6C9 6 9 10 12 10C15 10 15 6 19 6C19 10 15 10 15 12C15 14 19 14 19 18C15 18 15 14 12 14C9 14 9 18 5 18C5 14 9 14 9 12C9 10 5 10 5 6Z" fill="none" stroke="#fff" stroke-width="2"/></svg>
<div style="position:absolute;left:642.6px;top:38px;width:40px;height:2px;background:#e59be4"></div>
<svg style="left:699.7px;top:8px" width="24" height="24"><circle cx="12" cy="12" r="11.5" fill="#6e40c9"/><path d="M8 18V15C6 15 5 13 5 11C5 7 8 5 12 5C16 5 19 7 19 11C19 13 18 15 16 15V18" fill="none" stroke="#fff" stroke-width="2"/></svg>
<div style="position:absolute;left:691.7px;top:38px;width:40px;height:2px;background:#e59be4"></div>
<svg style="left:748.8000000000001px;top:8px" width="24" height="24"><circle cx="12" cy="12" r="11.5" fill="#5865f2"/><path d="M6 8C8 6 16 6 18 8C19 11 19 14 18 16C15 17 9 17 6 16C5 14 5 11 6 8Z" fill="#fff"/><circle cx="9.5" cy="12" r="1.5" fill="#5865f2"/><circle cx="14.5" cy="12" r="1.5" fill="#5865f2"/><circle cx="19" cy="19" r="5.5" fill="#ed4245"/><text x="16.3" y="22.5" font-size="8.5" font-weight="bold" fill="#fff" font-family="Liberation Sans">3</text></svg>
<div style="position:absolute;left:740.8000000000001px;top:38px;width:40px;height:2px;background:#e59be4"></div>
<svg style="left:797.9px;top:8px" width="24" height="24"><circle cx="12" cy="12" r="11.5" fill="#0b4f86"/><circle cx="12" cy="12" r="11.5" fill="url(#stm)"/><circle cx="15" cy="9" r="3.5" fill="none" stroke="#fff" stroke-width="1.6"/><path d="M2 13L10 16" stroke="#fff" stroke-width="2.5"/></svg>
<div style="position:absolute;left:789.9px;top:38px;width:40px;height:2px;background:#e59be4"></div>
<svg style="left:847.0px;top:8px" width="24" height="24"><path d="M12 1L23 12L12 23L1 12Z" fill="#60b4f6"/><path d="M12 12L23 12L12 23Z" fill="#f4de60"/><path d="M1 12L12 1L12 12Z" fill="#f26a6a"/><path d="M12 12L12 1L23 12Z" fill="#7ed57a"/><path d="M9 3V21M13 6L9 10" stroke="#222" stroke-width="1.5"/></svg>
<svg style="left:896.1px;top:8px" width="24" height="24"><path d="M1 3L17 0L24 8L20 24L2 22Z" fill="#b345f1"/><path d="M1 3L17 0L24 8L8 14Z" fill="#ff318c"/><rect x="4" y="4" width="16" height="16" fill="#000"/><text x="5.5" y="12" font-size="7" font-weight="bold" fill="#fff" font-family="Liberation Sans">PS</text><rect x="6" y="16" width="6" height="1.3" fill="#fff"/></svg>
<div style="position:absolute;left:884.1px;top:38px;width:48px;height:2px;background:#e59be4"></div>
<svg style="left:945.2px;top:8px" width="24" height="24"><circle cx="12" cy="12" r="11.5" fill="#5bb03f"/><circle cx="12" cy="13" r="10" fill="#eaeaea"/><text x="3.5" y="17" font-size="10.5" font-weight="bold" fill="#222" font-family="Liberation Sans">HS</text></svg>
<svg style="left:994.3000000000001px;top:8px" width="24" height="24"><path d="M17 1L23 4V20L17 23L6 13L2 16L0 15V9L2 8L6 11ZM17 7L11 12L17 17Z" fill="#0a7bd4"/><path d="M17 1L23 4V20L17 23Z" fill="#2ea7f2"/></svg>
<svg style="left:1043.4px;top:8px" width="24" height="24"><circle cx="12" cy="12" r="11.5" fill="#1ed760"/><path d="M5.5 8.5C10 7 15 7.5 18.5 9.5M6.5 12C10 11 14 11.5 17 13M7.5 15.3C10 14.6 13 15 15.5 16.3" fill="none" stroke="#000" stroke-width="1.8" stroke-linecap="round"/></svg>
<div style="position:absolute;left:1035.4px;top:38px;width:40px;height:2px;background:#e59be4"></div>
<svg style="left:1092.5px;top:8px" width="24" height="24"><path d="M1 2H23L12 23Z" fill="#3a75c4" stroke="#c83232" stroke-width="1.5"/><text x="7" y="14" font-size="11" font-weight="bold" fill="#f5d442" font-family="Liberation Serif">S</text></svg>
<svg style="left:1141.6000000000001px;top:8px" width="24" height="24"><rect x="1" y="1" width="22" height="22" fill="#001e36" stroke="#31a8ff" stroke-width="1.5"/><text x="4" y="17" font-size="11" font-weight="bold" fill="#31a8ff" font-family="Liberation Sans">Ps</text></svg>
<svg style="left:1190.7px;top:8px" width="24" height="24"><rect x="2" y="3" width="20" height="14" fill="#cfd4d8"/><rect x="4" y="5" width="16" height="10" fill="#e8f4fb"/><path d="M5 12L8 9L10 13L13 6L15 11L19 10" fill="none" stroke="#3a8ed0" stroke-width="1.1"/><rect x="9" y="18" width="6" height="3" fill="#aab"/></svg>
<svg style="left:1239.8px;top:8px" width="24" height="24"><rect x="0" y="1" width="24" height="22" fill="#560da3"/><text x="1.2" y="15.5" font-size="7.5" font-weight="bold" fill="#fff" font-family="Liberation Sans">NZXT</text></svg>
<div style="position:absolute;left:1231.8px;top:38px;width:40px;height:2px;background:#e59be4"></div>
<svg style="left:1288.9px;top:8px" width="24" height="24"><circle cx="12" cy="12" r="11.5" fill="#2a3b66"/><circle cx="12" cy="12" r="8.5" fill="#7fb3e6"/><circle cx="12" cy="12" r="6.5" fill="#2a3b66"/><circle cx="12" cy="12" r="5.5" fill="#c7d9ef"/></svg>
<div style="position:absolute;left:1280.9px;top:38px;width:40px;height:2px;background:#e59be4"></div>
</div>
<svg style="left:2221px;top:1416px" width="13" height="8"><path d="M0.5 7L6.5 1L12.5 7" fill="none" stroke="#fff" stroke-width="1.3"/></svg>
<svg style="left:2244px;top:1413px" width="14" height="14"><circle cx="7" cy="7" r="7" fill="#1f4fa0"/><ellipse cx="7" cy="5" rx="5" ry="3" fill="#7fb0f0"/></svg>
<svg style="left:2267px;top:1413px" width="17" height="14"><path d="M2 4C4 2 12 2 14 4C15 7 15 10 14 12C11 13 5 13 2 12C1 10 1 7 2 4Z" fill="#fff"/><circle cx="6" cy="8" r="1.3" fill="#1d1e22"/><circle cx="10" cy="8" r="1.3" fill="#1d1e22"/><circle cx="14" cy="3" r="2.5" fill="#e55353"/></svg>
<svg style="left:2291px;top:1413px" width="17" height="14"><path d="M1 5H4L8 1V13L4 9H1Z" fill="none" stroke="#fff" stroke-width="1.1"/><path d="M10 4A4 4 0 0 1 10 10M12 2A7 7 0 0 1 12 12M14 1A9 9 0 0 1 14 13" fill="none" stroke="#fff" stroke-width="1"/></svg>
<svg style="left:2339px;top:1413px" width="17" height="14"><path d="M1 5H4L8 1V13L4 9H1Z" fill="none" stroke="#fff" stroke-width="1.1"/><path d="M10 4A4 4 0 0 1 10 10M12 2A7 7 0 0 1 12 12M14 1A9 9 0 0 1 14 13" fill="none" stroke="#fff" stroke-width="1"/></svg>
<svg style="left:2316px;top:1412px" width="15" height="15"><circle cx="7.5" cy="7.5" r="7" fill="#f44336"/><path d="M7.5 7.5L7.5 0.5A7 7 0 0 1 14.5 7.5Z" fill="#4caf50"/><path d="M7.5 7.5L14.5 7.5A7 7 0 0 1 7.5 14.5Z" fill="#ffc107"/><path d="M7.5 7.5L7.5 14.5A7 7 0 0 1 0.5 7.5Z" fill="#2196f3"/><circle cx="7.5" cy="7.5" r="3.5" fill="#1d1e22"/></svg>
<svg style="left:2363px;top:1413px" width="17" height="15"><rect x="2.5" y="2.5" width="13" height="9" fill="none" stroke="#fff" stroke-width="1.1"/><path d="M9 11.5V14M5 14H13" stroke="#fff" stroke-width="1.1"/><rect x="0" y="0" width="6" height="5" fill="#1d1e22" stroke="#fff" stroke-width="1"/></svg>
<svg style="left:2387px;top:1413px" width="17" height="15"><rect x="2.5" y="2.5" width="13" height="9" fill="none" stroke="#fff" stroke-width="1.1"/><path d="M9 11.5V14M5 14H13" stroke="#fff" stroke-width="1.1"/><rect x="0" y="0" width="6" height="5" fill="#1d1e22" stroke="#fff" stroke-width="1"/></svg>
<div class="t" style="left:2413px;top:1410px;font-size:11.5px;color:#fff">NLD</div>
<div class="t" style="left:2454px;top:1400px;font-size:11.5px;color:#fff">20:47</div>
<div class="t" style="left:2448px;top:1418px;font-size:11.5px;color:#fff">31-7-2022</div>
<svg style="left:2518px;top:1411px" width="20" height="20"><path d="M1 1H16V12H6L3 15V12H1Z" fill="none" stroke="#fff" stroke-width="1.2"/><path d="M4 4H13M4 6.5H13M4 9H10" stroke="#fff"/><circle cx="14" cy="14" r="5" fill="#1d1e22" stroke="#fff" stroke-width="1"/><text x="12" y="17" font-size="7.5" fill="#fff" font-family="Liberation Sans">1</text></svg>
<div class="t" style="left:4434px;top:1287.5px;font-size:11.5px;color:#fff">20:47</div>
<div class="t" style="left:4428px;top:1305.4px;font-size:11.5px;color:#fff">31-7-2022</div>
</body></html>
